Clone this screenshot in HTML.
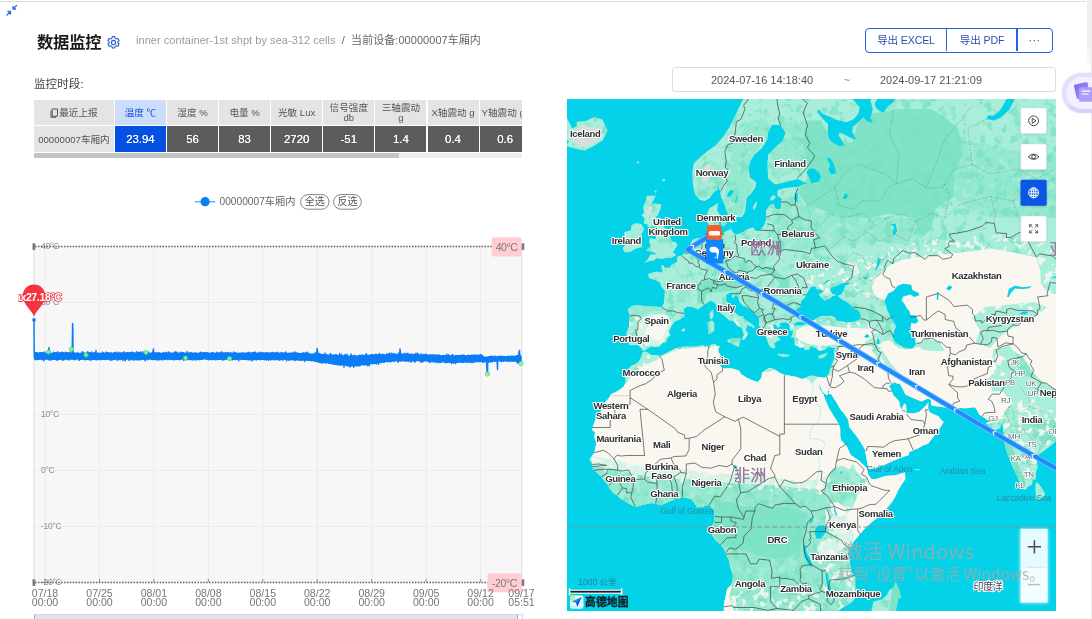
<!DOCTYPE html>
<html lang="zh-CN">
<head>
<meta charset="utf-8">
<title>数据监控</title>
<style>
*{box-sizing:border-box;margin:0;padding:0}
html,body{width:1092px;height:619px;overflow:hidden;background:#fff}
body{position:relative;font-family:"Liberation Sans","Noto Sans CJK SC",sans-serif;color:#333;font-size:11px}
.abs{position:absolute}
svg.abs,#title,#crumb,#period,#btns,#date,#tbl{will-change:transform}
#topline{left:0;top:1px;width:1086px;height:1px;background:#dcdcdc}
#rstrip{left:1086.5px;top:0;width:6px;height:64px;background:linear-gradient(180deg,#f0f0f0 0,#f1f1f1 70%,#fafafa 100%)}
#title{left:36.6px;top:31px;font-size:16.3px;font-weight:bold;color:#1a1a1a;line-height:22px;letter-spacing:-0.2px;white-space:nowrap}
#crumb{left:136px;top:33px;font-size:11px;line-height:15px;color:#9a9a9a;white-space:nowrap;letter-spacing:0.05px}
#crumb b{font-weight:normal;color:#666}
#period{left:34px;top:76.5px;font-size:11.6px;line-height:14px;color:#444;white-space:nowrap}
/* buttons */
#btns{left:865px;top:28px;width:188px;height:25px;border:1.5px solid #1f63e6;border-radius:4px;background:#fff}
#btns span{position:absolute;top:0;height:22px;line-height:22px;text-align:center;color:#2a4fae;font-size:10.6px;letter-spacing:-0.15px;white-space:nowrap}
#btns i{position:absolute;top:0;width:1.5px;height:22px;background:#1f63e6}
/* date */
#date{left:672px;top:67px;width:384px;height:25px;border:1px solid #dcdcdc;border-radius:3px;background:#fff}
#date span{position:absolute;top:0;height:23px;line-height:25px;color:#555;font-size:11px;white-space:nowrap;text-align:center}
/* table */
#tbl{left:34px;top:100px;width:488px;height:58px;overflow:hidden}
#tbl .c{position:absolute;display:flex;align-items:center;justify-content:center;text-align:center;white-space:nowrap;overflow:hidden}
#tbl .h{top:0;height:25px;background:#e4e4e4;color:#555;font-size:9.6px;line-height:10px}
#tbl .d{top:26px;height:26px;background:#5c5c5c;color:#fff;font-size:11.4px;text-shadow:0 0 0.35px #fff}
#tbl .h.sel{background:#ccdcfb;color:#1550d8}
#tbl .d.sel{background:#0450e0}
#tbl .d.first{background:#e4e4e4;color:#555;font-size:9.6px;text-shadow:none}
#sb{left:34px;top:152.5px;width:488px;height:5px;background:#ededed}
#sb i{position:absolute;left:0;top:0;width:365px;height:5px;background:#c4c4c4}
/* float */
#float{left:1062px;top:73px;width:60px;height:39.5px;border-radius:20px;background:#f3f0ff;border:4.5px solid #e4defc;border-bottom-color:#d9d1fa;box-shadow:0 0 2.5px #e4defc,inset 0 0 2px #e9e4fd}
</style>
</head>
<body>
<div id="topline" class="abs"></div>
<div id="rstrip" class="abs"></div>
<div class="abs" style="left:1090.5px;top:0;width:1.5px;height:619px;background:#ededed"></div>
<svg class="abs" style="left:5px;top:3px" width="14" height="14" viewBox="0 0 14 14"><g stroke="#2f6be6" stroke-width="1.3" fill="none" stroke-linecap="round"><path d="M8 6 L11.5 2.5 M8 3.4 V6 H10.6"/><path d="M5.5 8.5 L2 12 M5.5 11.1 V8.5 H2.9"/></g></svg>

<div id="title" class="abs">数据监控</div>
<svg class="abs" style="left:106px;top:35px" width="15" height="15" viewBox="0 0 15 15"><g fill="none" stroke="#2a5fd0" stroke-width="1.1"><circle cx="7.5" cy="7.5" r="2.1"/><path d="M6.3 1.6h2.4l.4 1.6 1.2.7 1.6-.5 1.2 2.1-1.2 1.1v1.4l1.2 1.1-1.2 2.1-1.6-.5-1.2.7-.4 1.6H6.3l-.4-1.6-1.2-.7-1.6.5-1.2-2.1 1.2-1.1V6.6L1.9 5.5l1.2-2.1 1.6.5 1.2-.7z" stroke-linejoin="round"/></g></svg>
<div id="crumb" class="abs">inner container-1st shpt by sea-312 cells&nbsp; <b>/</b>&nbsp; <b>当前设备:00000007车厢内</b></div>

<div id="btns" class="abs">
  <span style="left:0;width:80px">导出 EXCEL</span><i style="left:79.5px"></i>
  <span style="left:81px;width:70px">导出 PDF</span><i style="left:150px"></i>
  <span style="left:151px;width:35px;letter-spacing:0.5px">···</span>
</div>

<div id="period" class="abs">监控时段:</div>
<div id="date" class="abs">
  <span style="left:38px;width:102px">2024-07-16 14:18:40</span>
  <span style="left:168px;width:12px;color:#888">~</span>
  <span style="left:206px;width:104px">2024-09-17 21:21:09</span>
</div>

<div id="tbl" class="abs">
  <div class="c h" style="left:0;width:79.9px"><svg width="9" height="10" viewBox="0 0 9 10" style="margin-right:0"><path d="M2.2 1h5.3v7.2H2.2z M1 2.4v6.9h5" fill="none" stroke="#555" stroke-width="1"/></svg>最近上报</div>
  <div class="c h sel" style="left:80.9px;width:51px">温度 ℃</div>
  <div class="c h" style="left:133.0px;width:51px">湿度 %</div>
  <div class="c h" style="left:185.1px;width:51px">电量 %</div>
  <div class="c h" style="left:237.2px;width:51px">光敏 Lux</div>
  <div class="c h" style="left:289.3px;width:51px;white-space:normal">信号强度<br>db</div>
  <div class="c h" style="left:341.4px;width:51px;white-space:normal">三轴震动<br>g</div>
  <div class="c h" style="left:393.5px;width:51px">X轴震动 g</div>
  <div class="c h" style="left:445.6px;width:51px;justify-content:flex-start;padding-left:2px">Y轴震动 g</div>
  <div class="c d first" style="left:0;width:79.9px">00000007车厢内</div>
  <div class="c d sel" style="left:80.9px;width:51px">23.94</div>
  <div class="c d" style="left:133.0px;width:51px">56</div>
  <div class="c d" style="left:185.1px;width:51px">83</div>
  <div class="c d" style="left:237.2px;width:51px">2720</div>
  <div class="c d" style="left:289.3px;width:51px">-51</div>
  <div class="c d" style="left:341.4px;width:51px">1.4</div>
  <div class="c d" style="left:393.5px;width:51px">0.4</div>
  <div class="c d" style="left:445.6px;width:51px">0.6</div>
</div>
<div id="sb" class="abs"><i></i></div>

<svg class="abs" style="left:0;top:180px" width="560" height="439" viewBox="0 180 560 439" font-family="Liberation Sans, Noto Sans CJK SC, sans-serif">
<line x1="195" y1="201.7" x2="215.3" y2="201.7" stroke="#58a6ff" stroke-width="1.4"/>
<circle cx="205.1" cy="201.7" r="4.6" fill="#0a7cf5"/>
<text x="219.5" y="205.3" font-size="10.2" fill="#666">00000007车厢内</text>
<rect x="300.6" y="194.6" width="28.4" height="14.6" rx="7.3" fill="#fff" stroke="#777" stroke-width="0.9"/>
<text x="314.8" y="205.4" font-size="10" fill="#555" text-anchor="middle">全选</text>
<rect x="333.6" y="194.6" width="27.7" height="14.6" rx="7.3" fill="#fff" stroke="#777" stroke-width="0.9"/>
<text x="347.5" y="205.4" font-size="10" fill="#555" text-anchor="middle">反选</text>
<rect x="34" y="246" width="488" height="336.5" fill="#f7f7f7"/>
<line x1="45.0" y1="246" x2="45.0" y2="582" stroke="#ebebeb" stroke-width="1"/>
<line x1="45.0" y1="579" x2="45.0" y2="582" stroke="#777" stroke-width="0.8"/>
<line x1="99.5" y1="246" x2="99.5" y2="582" stroke="#ebebeb" stroke-width="1"/>
<line x1="99.5" y1="579" x2="99.5" y2="582" stroke="#777" stroke-width="0.8"/>
<line x1="153.9" y1="246" x2="153.9" y2="582" stroke="#ebebeb" stroke-width="1"/>
<line x1="153.9" y1="579" x2="153.9" y2="582" stroke="#777" stroke-width="0.8"/>
<line x1="208.4" y1="246" x2="208.4" y2="582" stroke="#ebebeb" stroke-width="1"/>
<line x1="208.4" y1="579" x2="208.4" y2="582" stroke="#777" stroke-width="0.8"/>
<line x1="262.8" y1="246" x2="262.8" y2="582" stroke="#ebebeb" stroke-width="1"/>
<line x1="262.8" y1="579" x2="262.8" y2="582" stroke="#777" stroke-width="0.8"/>
<line x1="317.2" y1="246" x2="317.2" y2="582" stroke="#ebebeb" stroke-width="1"/>
<line x1="317.2" y1="579" x2="317.2" y2="582" stroke="#777" stroke-width="0.8"/>
<line x1="371.7" y1="246" x2="371.7" y2="582" stroke="#ebebeb" stroke-width="1"/>
<line x1="371.7" y1="579" x2="371.7" y2="582" stroke="#777" stroke-width="0.8"/>
<line x1="426.2" y1="246" x2="426.2" y2="582" stroke="#ebebeb" stroke-width="1"/>
<line x1="426.2" y1="579" x2="426.2" y2="582" stroke="#777" stroke-width="0.8"/>
<line x1="480.6" y1="246" x2="480.6" y2="582" stroke="#ebebeb" stroke-width="1"/>
<line x1="480.6" y1="579" x2="480.6" y2="582" stroke="#777" stroke-width="0.8"/>
<line x1="34" y1="302.5" x2="522" y2="302.5" stroke="#ececec" stroke-width="1"/>
<line x1="34" y1="358.5" x2="522" y2="358.5" stroke="#ececec" stroke-width="1"/>
<line x1="34" y1="414.5" x2="522" y2="414.5" stroke="#ececec" stroke-width="1"/>
<line x1="34" y1="470.5" x2="522" y2="470.5" stroke="#ececec" stroke-width="1"/>
<line x1="34" y1="526.5" x2="522" y2="526.5" stroke="#ececec" stroke-width="1"/>
<line x1="34" y1="246" x2="34" y2="582" stroke="#dcdcdc" stroke-width="1"/>
<line x1="521.8" y1="246" x2="521.8" y2="582" stroke="#dcdcdc" stroke-width="1"/>
<text x="41" y="249.2" font-size="8.5" fill="#8a8a8a" letter-spacing="-0.3">40°C</text>
<text x="41" y="305.2" font-size="8.5" fill="#8a8a8a" letter-spacing="-0.3">30°C</text>
<text x="41" y="417.2" font-size="8.5" fill="#8a8a8a" letter-spacing="-0.3">10°C</text>
<text x="41" y="473.2" font-size="8.5" fill="#8a8a8a" letter-spacing="-0.3">0°C</text>
<text x="41" y="529.2" font-size="8.5" fill="#8a8a8a" letter-spacing="-0.3">-10°C</text>
<text x="41" y="585.2" font-size="8.5" fill="#8a8a8a" letter-spacing="-0.3">-20°C</text>
<line x1="35" y1="246.4" x2="522" y2="246.4" stroke="#5a5a5a" stroke-width="1.5" stroke-dasharray="1.5 1.4"/>
<line x1="35" y1="582.6" x2="522" y2="582.6" stroke="#5a5a5a" stroke-width="1.5" stroke-dasharray="1.5 1.4"/>
<rect x="32.5" y="243.3" width="2.8" height="6.6" fill="#7a7a7a"/><rect x="521.3" y="243.3" width="3" height="6.6" fill="#7a7a7a"/>
<rect x="32.5" y="579.3" width="2.8" height="6.6" fill="#7a7a7a"/><rect x="521.3" y="579.3" width="3" height="6.6" fill="#7a7a7a"/>
<rect x="491.6" y="237.3" width="30" height="19.2" rx="2.5" fill="#ffcdd2"/><text x="506.6" y="250.6" font-size="10.5" fill="#7a7a7a" text-anchor="middle" letter-spacing="-0.4">40°C</text>
<rect x="487.4" y="573.4" width="34.2" height="18.8" rx="2.5" fill="#ffcdd2"/><text x="504.5" y="586.6" font-size="10.5" fill="#7a7a7a" text-anchor="middle" letter-spacing="-0.4">-20°C</text>
<path d="M34.0 320.0 L34.2 354.0 L34.6 358.8 L35.4 352.6 L36.1 359.4 L37.0 354.4 L38.0 357.9 L38.9 354.4 L39.7 359.1 L40.8 354.2 L41.7 359.7 L42.9 352.9 L43.8 360.7 L44.5 352.0 L45.4 358.2 L46.2 353.7 L47.3 358.4 L48.3 352.7 L49.0 347.5 L49.2 359.4 L50.0 354.4 L50.8 359.8 L51.7 353.7 L52.7 359.2 L53.6 352.2 L54.7 358.5 L55.7 353.0 L56.9 360.0 L57.7 351.7 L58.5 359.1 L59.6 354.1 L60.6 357.9 L61.7 352.3 L62.7 360.4 L63.5 352.5 L64.6 359.5 L65.5 352.1 L66.7 359.2 L67.8 354.4 L68.9 359.7 L70.1 352.1 L71.0 359.0 L72.1 354.5 L72.4 338.0 L72.6 323.5 L72.9 331.0 L73.0 358.3 L73.8 354.4 L74.9 358.2 L75.7 353.4 L76.9 358.1 L77.9 352.9 L79.1 360.3 L80.2 353.8 L81.2 358.9 L82.3 351.7 L83.1 358.3 L84.0 353.9 L84.9 359.6 L85.8 354.6 L86.7 358.9 L87.7 351.7 L88.8 359.4 L89.8 352.6 L90.6 360.5 L91.7 352.0 L92.8 359.0 L93.7 354.3 L94.8 358.0 L95.5 354.0 L96.0 350.5 L96.3 358.8 L97.0 354.6 L97.8 358.1 L98.7 354.5 L99.9 359.6 L100.7 353.8 L101.6 358.9 L102.4 352.1 L103.6 359.2 L104.6 354.3 L105.3 358.8 L106.2 352.1 L107.0 357.9 L108.2 353.0 L109.0 359.4 L109.7 353.0 L110.9 360.4 L112.0 353.8 L112.9 358.3 L114.0 353.0 L115.2 358.8 L116.0 352.2 L117.2 360.4 L118.4 352.1 L119.5 358.5 L120.5 353.5 L121.2 357.9 L122.0 353.8 L123.1 360.7 L124.0 351.8 L125.3 360.7 L126.2 353.9 L127.0 358.4 L127.8 352.7 L129.0 360.3 L130.0 352.6 L131.1 358.1 L132.2 351.9 L133.3 360.1 L134.3 354.1 L135.4 358.8 L136.6 351.7 L137.5 359.0 L138.7 352.4 L139.5 358.2 L140.3 351.9 L141.4 358.2 L142.6 351.7 L143.6 358.9 L144.6 354.2 L145.3 360.7 L146.4 353.0 L147.6 359.1 L148.8 352.1 L149.6 358.6 L150.5 353.9 L151.5 358.6 L152.4 354.2 L153.5 349.0 L153.6 358.9 L154.6 352.8 L155.8 359.1 L157.0 353.1 L158.0 359.4 L158.7 353.3 L159.5 357.8 L160.6 354.1 L161.6 360.0 L162.6 353.6 L163.6 359.5 L164.7 354.3 L165.7 358.6 L166.6 352.3 L167.5 359.5 L168.7 351.9 L169.6 359.6 L170.6 353.1 L171.7 359.2 L172.7 353.2 L173.9 359.9 L175.1 351.8 L175.9 359.5 L177.1 352.1 L177.9 358.2 L178.8 354.4 L179.7 358.0 L180.7 352.2 L181.9 358.3 L183.0 352.6 L183.8 360.4 L185.0 353.9 L186.3 359.0 L187.2 351.6 L188.4 358.3 L189.3 353.0 L190.2 358.4 L191.1 352.4 L191.8 359.5 L192.7 354.5 L193.6 359.7 L194.6 354.4 L195.8 360.2 L197.1 354.3 L197.9 357.9 L199.1 353.8 L199.8 359.1 L201.0 352.1 L201.9 358.3 L203.1 352.9 L204.2 358.1 L204.9 352.5 L205.8 358.0 L207.0 352.7 L208.2 358.1 L209.4 354.4 L210.5 359.2 L211.4 352.9 L212.6 358.6 L213.4 353.0 L214.2 358.1 L215.0 354.4 L215.8 358.7 L216.7 352.3 L217.6 359.3 L218.3 353.6 L219.1 358.6 L219.8 352.4 L220.8 358.4 L221.7 351.8 L222.5 360.3 L223.4 353.1 L224.6 359.0 L225.6 352.5 L226.8 358.8 L228.0 352.5 L229.0 359.0 L229.9 354.4 L230.7 358.0 L231.8 353.8 L232.6 358.1 L233.7 352.0 L234.8 358.7 L235.6 353.7 L236.6 358.3 L237.5 353.8 L238.8 360.7 L239.8 353.9 L241.0 358.7 L241.9 354.6 L242.8 359.2 L243.8 354.0 L244.8 357.8 L245.6 354.3 L246.5 357.9 L247.2 353.7 L248.1 359.6 L249.1 352.3 L250.1 360.0 L251.3 353.4 L252.2 360.8 L253.0 352.4 L254.0 357.9 L255.2 351.9 L256.2 360.0 L257.4 354.2 L258.4 359.3 L259.5 352.2 L260.7 359.6 L261.9 352.5 L262.9 358.5 L263.7 354.2 L264.6 358.1 L265.7 352.9 L266.8 359.7 L267.8 353.1 L268.5 360.2 L269.6 353.1 L270.6 359.8 L271.4 352.4 L272.2 358.0 L273.1 352.4 L273.9 360.0 L275.1 353.1 L276.0 359.2 L277.1 352.3 L278.1 359.7 L278.9 354.1 L279.7 360.0 L280.6 352.9 L281.3 358.0 L282.1 352.6 L283.2 359.8 L284.1 353.0 L285.0 359.2 L285.8 351.9 L286.6 360.8 L287.8 354.6 L288.8 360.4 L290.0 353.4 L290.9 358.6 L292.1 354.2 L293.1 358.5 L294.1 352.0 L294.9 360.6 L295.8 352.2 L296.9 358.9 L298.1 353.5 L298.8 358.3 L299.8 353.7 L300.7 358.8 L301.6 354.1 L302.7 358.5 L303.8 352.6 L304.6 361.5 L305.7 352.5 L306.6 359.9 L307.5 352.2 L308.5 360.0 L309.4 354.6 L310.2 359.3 L311.3 354.6 L312.5 359.9 L313.4 354.0 L314.2 360.5 L315.4 352.8 L316.6 361.6 L317.0 348.5 L317.8 352.7 L318.8 362.2 L319.5 353.5 L320.4 362.6 L321.5 355.2 L322.2 363.5 L323.0 354.7 L323.9 361.5 L325.0 353.0 L325.8 363.1 L326.7 354.6 L327.6 361.5 L328.4 356.0 L329.6 363.0 L330.4 353.4 L331.7 363.2 L332.4 356.4 L333.2 363.0 L333.9 356.3 L334.8 364.1 L336.0 354.4 L336.9 363.8 L337.9 356.1 L338.8 362.6 L339.6 353.6 L340.4 364.7 L341.4 354.2 L342.3 363.9 L343.1 356.3 L344.0 367.1 L345.2 354.3 L345.9 363.2 L347.0 354.2 L348.0 365.8 L348.7 356.5 L349.9 367.0 L351.0 353.9 L351.9 363.7 L352.7 356.0 L353.7 367.5 L354.8 355.4 L356.0 365.2 L357.0 358.1 L358.1 364.1 L359.3 355.3 L360.2 363.4 L361.0 355.2 L362.1 363.2 L362.8 355.6 L363.9 364.2 L364.7 355.2 L365.4 363.6 L366.3 353.6 L367.4 365.8 L368.3 356.5 L369.2 365.8 L370.3 356.0 L371.0 363.6 L372.1 355.5 L372.9 363.9 L374.1 356.1 L374.8 362.4 L375.8 354.2 L376.6 363.9 L377.7 354.8 L378.5 364.2 L379.4 353.5 L380.2 361.2 L381.3 355.4 L382.5 361.9 L383.3 355.5 L384.3 362.3 L385.5 355.7 L386.4 360.6 L387.6 355.6 L388.4 359.9 L389.3 353.1 L390.5 362.0 L391.7 353.0 L392.6 360.1 L393.8 353.6 L394.5 361.5 L395.4 354.7 L396.3 359.9 L397.0 355.0 L397.9 362.3 L398.7 352.9 L399.5 360.4 L400.0 349.0 L400.6 353.3 L401.6 359.4 L402.5 354.7 L403.7 359.8 L404.6 353.2 L405.4 360.5 L406.5 353.6 L407.2 359.3 L408.0 353.1 L408.8 361.5 L410.0 354.9 L410.9 362.1 L411.9 355.2 L413.0 360.2 L413.8 356.0 L415.0 362.1 L416.0 353.2 L416.7 360.0 L417.7 353.3 L418.9 360.6 L419.7 354.9 L420.7 362.2 L421.5 353.8 L422.6 362.0 L423.7 354.5 L424.6 360.5 L425.5 354.1 L426.3 360.2 L427.4 355.7 L428.1 359.8 L429.1 355.6 L430.4 362.5 L431.6 355.9 L432.3 360.2 L433.3 354.6 L434.3 360.7 L435.2 355.0 L436.3 362.3 L437.4 354.9 L438.2 362.7 L439.1 355.3 L440.0 362.5 L440.8 356.3 L441.6 360.8 L442.8 355.4 L443.7 361.6 L444.9 355.7 L445.8 362.9 L446.8 354.3 L447.6 361.9 L448.7 354.8 L449.9 360.7 L450.8 357.0 L451.6 363.5 L452.6 354.6 L453.5 363.2 L454.5 356.6 L455.6 363.4 L456.3 355.6 L457.4 361.3 L458.3 356.9 L459.1 361.3 L460.1 355.4 L460.9 360.6 L461.8 355.3 L462.6 361.4 L463.4 354.9 L464.4 360.6 L465.2 356.0 L466.2 362.3 L466.9 356.7 L468.0 361.6 L468.9 356.2 L470.1 361.2 L471.1 355.9 L472.0 362.8 L473.3 355.8 L474.1 362.3 L474.9 356.8 L476.1 361.3 L477.3 355.5 L478.4 361.3 L479.2 356.6 L480.2 361.7 L481.4 356.3 L482.5 362.1 L483.5 357.3 L484.3 361.5 L485.5 357.9 L486.5 362.0 L487.0 371.0 L487.6 373.5 L487.7 357.7 L488.5 362.2 L489.7 357.0 L490.5 362.1 L491.4 356.1 L492.4 361.9 L493.2 356.3 L494.0 361.0 L495.2 356.1 L496.0 360.5 L496.9 356.7 L497.5 369.5 L497.8 360.3 L498.7 356.3 L499.9 360.1 L500.9 356.2 L501.6 361.7 L502.4 356.5 L503.4 361.2 L504.2 356.8 L505.2 360.8 L506.3 356.7 L507.2 359.9 L508.3 356.6 L509.1 361.5 L510.2 356.7 L511.0 360.9 L511.8 357.4 L512.7 360.1 L513.7 356.6 L514.4 361.2 L515.1 356.1 L516.3 361.9 L517.0 355.6 L517.9 363.2 L518.7 354.5 L519.5 350.5 L519.9 362.5 L521.0 363.0 L521.1 356.5" fill="none" stroke="#0a7cf5" stroke-width="1.45" stroke-linejoin="round" stroke-linecap="round"/>
<path d="M34.5 352.4 L35.8 352.0 L37.1 352.1 L38.4 352.8 L39.7 352.1 L41.0 352.0 L42.3 352.1 L43.6 352.4 L44.9 352.7 L46.2 352.4 L47.5 352.9 L48.8 352.7 L50.1 352.2 L51.4 352.7 L52.7 352.8 L54.0 352.3 L55.3 352.0 L56.6 352.3 L57.9 352.8 L59.2 352.3 L60.5 352.1 L61.8 351.9 L63.1 352.5 L64.4 352.4 L65.7 352.1 L67.0 352.1 L68.3 352.2 L69.6 352.3 L70.9 352.6 L72.2 352.9 L73.5 352.3 L74.8 352.4 L76.1 352.8 L77.4 352.2 L78.7 352.9 L80.0 352.8 L81.3 352.7 L82.6 352.3 L83.9 352.3 L85.2 352.8 L86.5 352.6 L87.8 352.8 L89.1 352.0 L90.4 352.5 L91.7 352.9 L93.0 352.3 L94.3 352.2 L95.6 352.0 L96.9 352.6 L98.2 352.8 L99.5 352.5 L100.8 352.8 L102.1 352.9 L103.4 351.9 L104.7 352.7 L106.0 352.4 L107.3 352.1 L108.6 352.6 L109.9 352.8 L111.2 352.1 L112.5 352.9 L113.8 352.1 L115.1 352.1 L116.4 352.7 L117.7 352.7 L119.0 352.6 L120.3 352.2 L121.6 352.2 L122.9 352.3 L124.2 352.1 L125.5 352.6 L126.8 351.9 L128.1 352.0 L129.4 352.6 L130.7 352.1 L132.0 352.1 L133.3 352.0 L134.6 352.6 L135.9 352.3 L137.2 352.2 L138.5 352.4 L139.8 352.2 L141.1 352.5 L142.4 352.3 L143.7 352.7 L145.0 352.8 L146.3 352.7 L147.6 352.8 L148.9 352.5 L150.2 352.9 L151.5 352.2 L152.8 352.2 L154.1 352.8 L155.4 352.5 L156.7 352.1 L158.0 352.8 L159.3 352.0 L160.6 352.8 L161.9 352.8 L163.2 352.0 L164.5 352.3 L165.8 352.3 L167.1 352.8 L168.4 352.1 L169.7 352.6 L171.0 352.9 L172.3 352.6 L173.6 352.5 L174.9 351.9 L176.2 352.0 L177.5 352.9 L178.8 352.5 L180.1 352.5 L181.4 352.4 L182.7 352.0 L184.0 352.1 L185.3 352.9 L186.6 352.1 L187.9 352.9 L189.2 352.4 L190.5 352.7 L191.8 352.5 L193.1 352.6 L194.4 352.6 L195.7 352.2 L197.0 352.8 L198.3 352.8 L199.6 352.2 L200.9 352.3 L202.2 352.5 L203.5 352.0 L204.8 352.0 L206.1 352.7 L207.4 352.0 L208.7 352.5 L210.0 352.7 L211.3 352.4 L212.6 352.1 L213.9 352.5 L215.2 352.7 L216.5 352.2 L217.8 352.7 L219.1 352.1 L220.4 352.8 L221.7 352.0 L223.0 352.7 L224.3 352.2 L225.6 352.7 L226.9 352.6 L228.2 352.4 L229.5 352.6 L230.8 351.9 L232.1 352.8 L233.4 352.8 L234.7 351.9 L236.0 352.2 L237.3 352.7 L238.6 352.8 L239.9 352.5 L241.2 352.5 L242.5 352.2 L243.8 352.3 L245.1 352.7 L246.4 352.5 L247.7 352.0 L249.0 352.3 L250.3 352.5 L251.6 352.2 L252.9 352.1 L254.2 352.0 L255.5 352.2 L256.8 352.6 L258.1 352.8 L259.4 352.1 L260.7 352.3 L262.0 352.5 L263.3 352.3 L264.6 352.2 L265.9 352.7 L267.2 352.1 L268.5 352.4 L269.8 352.8 L271.1 352.7 L272.4 351.9 L273.7 352.8 L275.0 352.3 L276.3 352.4 L277.6 352.1 L278.9 352.5 L280.2 352.7 L281.5 352.5 L282.8 352.8 L284.1 352.5 L285.4 352.6 L286.7 352.9 L288.0 352.5 L289.3 352.7 L290.6 352.8 L291.9 352.1 L293.2 352.9 L294.5 352.8 L295.8 353.1 L297.1 352.4 L298.4 352.8 L299.7 353.1 L301.0 353.0 L302.3 352.6 L303.6 353.0 L304.9 352.9 L306.2 352.7 L307.5 352.7 L308.8 353.2 L310.1 353.2 L311.4 353.7 L312.7 353.5 L314.0 353.5 L315.3 353.4 L316.6 353.3 L317.9 353.1 L319.2 354.0 L320.5 353.3 L321.8 354.1 L323.1 353.7 L324.4 354.4 L325.7 353.9 L327.0 354.5 L328.3 354.4 L329.6 354.4 L330.9 353.9 L332.2 354.7 L333.5 354.3 L334.8 354.4 L336.1 354.3 L337.4 355.0 L338.7 354.8 L340.0 354.9 L341.3 354.9 L342.6 355.3 L343.9 355.1 L345.2 355.2 L346.5 355.2 L347.8 355.2 L349.1 355.7 L350.4 355.3 L351.7 355.1 L353.0 355.4 L354.3 354.8 L355.6 355.1 L356.9 355.7 L358.2 355.0 L359.5 355.3 L360.8 355.0 L362.1 354.6 L363.4 354.7 L364.7 355.0 L366.0 354.9 L367.3 354.6 L368.6 354.9 L369.9 354.6 L371.2 354.1 L372.5 354.0 L373.8 354.2 L375.1 354.2 L376.4 354.0 L377.7 354.2 L379.0 354.2 L380.3 353.8 L381.6 354.3 L382.9 353.4 L384.2 354.2 L385.5 354.2 L386.8 353.3 L388.1 353.5 L389.4 353.3 L390.7 353.5 L392.0 353.4 L393.3 353.4 L394.6 353.5 L395.9 353.4 L397.2 353.9 L398.5 353.3 L399.8 353.5 L401.1 353.3 L402.4 353.6 L403.7 353.8 L405.0 353.8 L406.3 353.5 L407.6 354.1 L408.9 354.2 L410.2 353.4 L411.5 353.3 L412.8 354.3 L414.1 353.7 L415.4 353.4 L416.7 354.0 L418.0 353.8 L419.3 354.3 L420.6 354.5 L421.9 354.4 L423.2 354.5 L424.5 354.5 L425.8 354.0 L427.1 354.0 L428.4 354.8 L429.7 354.2 L431.0 354.2 L432.3 354.4 L433.6 354.6 L434.9 354.9 L436.2 354.5 L437.5 355.2 L438.8 354.5 L440.1 355.0 L441.4 355.2 L442.7 355.0 L444.0 355.1 L445.3 355.1 L446.6 355.4 L447.9 355.2 L449.2 355.0 L450.5 355.3 L451.8 354.7 L453.1 355.1 L454.4 355.6 L455.7 355.0 L457.0 355.3 L458.3 354.7 L459.6 355.0 L460.9 355.2 L462.2 355.2 L463.5 355.0 L464.8 354.7 L466.1 355.5 L467.4 355.0 L468.7 354.6 L470.0 355.3 L471.3 354.5 L472.6 354.7 L473.9 354.3 L475.2 354.4 L476.5 354.7 L477.8 354.4 L479.1 354.7 L480.4 353.9 L481.7 354.2 L483.0 355.6 L484.3 356.8 L485.6 356.2 L486.9 356.8 L488.2 356.1 L489.5 356.2 L490.8 355.9 L492.1 356.3 L493.4 356.5 L494.7 356.5 L496.0 356.3 L497.3 356.2 L498.6 356.4 L499.9 355.6 L501.2 356.4 L502.5 355.7 L503.8 355.9 L505.1 356.0 L506.4 356.4 L507.7 355.6 L509.0 355.9 L510.3 355.7 L511.6 355.5 L512.9 355.6 L514.2 356.2 L515.5 356.2 L516.8 355.3 L518.1 354.8 L519.4 354.9 L520.7 354.5 L520.7 362.1 L519.4 363.0 L518.1 362.9 L516.8 362.1 L515.5 361.2 L514.2 361.1 L512.9 362.0 L511.6 361.8 L510.3 361.5 L509.0 361.3 L507.7 361.6 L506.4 362.1 L505.1 361.1 L503.8 361.5 L502.5 361.3 L501.2 361.8 L499.9 361.5 L498.6 361.2 L497.3 361.7 L496.0 361.8 L494.7 362.0 L493.4 361.5 L492.1 361.9 L490.8 361.9 L489.5 362.3 L488.2 361.7 L486.9 362.3 L485.6 362.0 L484.3 362.4 L483.0 362.9 L481.7 362.1 L480.4 361.7 L479.1 362.3 L477.8 362.4 L476.5 361.8 L475.2 362.6 L473.9 362.6 L472.6 362.1 L471.3 362.8 L470.0 362.8 L468.7 362.9 L467.4 362.6 L466.1 362.4 L464.8 362.4 L463.5 363.1 L462.2 362.9 L460.9 363.1 L459.6 362.6 L458.3 363.1 L457.0 362.9 L455.7 363.1 L454.4 363.3 L453.1 362.6 L451.8 363.1 L450.5 363.1 L449.2 362.7 L447.9 362.9 L446.6 363.0 L445.3 362.8 L444.0 362.7 L442.7 362.1 L441.4 362.9 L440.1 362.7 L438.8 362.0 L437.5 362.5 L436.2 361.8 L434.9 362.7 L433.6 362.6 L432.3 362.3 L431.0 361.6 L429.7 362.4 L428.4 362.2 L427.1 361.6 L425.8 361.6 L424.5 361.3 L423.2 362.1 L421.9 362.2 L420.6 361.8 L419.3 361.1 L418.0 361.3 L416.7 361.2 L415.4 361.5 L414.1 361.9 L412.8 361.4 L411.5 361.4 L410.2 361.5 L408.9 361.1 L407.6 361.5 L406.3 361.9 L405.0 361.4 L403.7 361.4 L402.4 361.2 L401.1 361.8 L399.8 361.4 L398.5 362.0 L397.2 361.1 L395.9 361.2 L394.6 361.7 L393.3 361.5 L392.0 361.9 L390.7 362.1 L389.4 362.1 L388.1 362.4 L386.8 362.3 L385.5 362.1 L384.2 362.3 L382.9 362.7 L381.6 363.0 L380.3 363.2 L379.0 363.2 L377.7 363.1 L376.4 363.8 L375.1 364.2 L373.8 363.7 L372.5 364.0 L371.2 364.1 L369.9 364.6 L368.6 364.7 L367.3 365.2 L366.0 365.1 L364.7 365.7 L363.4 365.6 L362.1 365.2 L360.8 365.8 L359.5 366.4 L358.2 366.5 L356.9 366.3 L355.6 366.4 L354.3 365.9 L353.0 366.3 L351.7 366.7 L350.4 366.4 L349.1 366.6 L347.8 366.6 L346.5 366.1 L345.2 365.7 L343.9 365.5 L342.6 365.4 L341.3 365.4 L340.0 365.8 L338.7 365.5 L337.4 365.2 L336.1 365.2 L334.8 365.0 L333.5 364.7 L332.2 364.6 L330.9 364.3 L329.6 363.5 L328.3 363.9 L327.0 363.1 L325.7 363.0 L324.4 363.5 L323.1 362.3 L321.8 363.0 L320.5 362.7 L319.2 362.6 L317.9 362.4 L316.6 361.8 L315.3 361.9 L314.0 361.6 L312.7 361.2 L311.4 361.6 L310.1 360.9 L308.8 360.9 L307.5 360.8 L306.2 360.8 L304.9 360.5 L303.6 360.6 L302.3 361.0 L301.0 360.8 L299.7 361.1 L298.4 360.6 L297.1 360.6 L295.8 360.7 L294.5 360.1 L293.2 360.6 L291.9 360.3 L290.6 360.5 L289.3 359.9 L288.0 360.3 L286.7 360.0 L285.4 359.9 L284.1 359.6 L282.8 360.5 L281.5 360.3 L280.2 360.2 L278.9 360.5 L277.6 360.0 L276.3 360.2 L275.0 360.2 L273.7 360.1 L272.4 360.0 L271.1 360.3 L269.8 360.1 L268.5 360.5 L267.2 359.9 L265.9 360.2 L264.6 360.4 L263.3 359.9 L262.0 360.0 L260.7 359.8 L259.4 360.2 L258.1 359.9 L256.8 360.1 L255.5 360.0 L254.2 360.2 L252.9 360.2 L251.6 360.4 L250.3 359.7 L249.0 360.3 L247.7 359.9 L246.4 360.3 L245.1 360.1 L243.8 360.0 L242.5 360.0 L241.2 360.3 L239.9 359.5 L238.6 359.7 L237.3 360.1 L236.0 359.9 L234.7 360.3 L233.4 359.9 L232.1 360.5 L230.8 360.2 L229.5 359.7 L228.2 359.7 L226.9 359.8 L225.6 359.7 L224.3 360.4 L223.0 359.8 L221.7 359.7 L220.4 360.0 L219.1 360.1 L217.8 360.0 L216.5 360.3 L215.2 360.4 L213.9 359.8 L212.6 360.2 L211.3 360.3 L210.0 360.0 L208.7 360.4 L207.4 360.0 L206.1 359.8 L204.8 359.5 L203.5 359.6 L202.2 359.9 L200.9 359.9 L199.6 360.3 L198.3 360.3 L197.0 360.1 L195.7 360.0 L194.4 359.7 L193.1 360.5 L191.8 360.3 L190.5 360.0 L189.2 360.3 L187.9 360.0 L186.6 360.5 L185.3 359.7 L184.0 359.7 L182.7 359.6 L181.4 359.7 L180.1 360.2 L178.8 360.3 L177.5 359.9 L176.2 360.1 L174.9 360.0 L173.6 359.8 L172.3 360.2 L171.0 359.8 L169.7 359.9 L168.4 359.7 L167.1 359.6 L165.8 359.8 L164.5 360.3 L163.2 360.3 L161.9 359.5 L160.6 359.7 L159.3 360.5 L158.0 360.4 L156.7 360.4 L155.4 360.3 L154.1 360.1 L152.8 360.2 L151.5 360.1 L150.2 359.6 L148.9 359.7 L147.6 360.4 L146.3 359.5 L145.0 360.4 L143.7 360.1 L142.4 359.8 L141.1 360.2 L139.8 360.4 L138.5 360.4 L137.2 360.5 L135.9 360.2 L134.6 360.4 L133.3 359.8 L132.0 359.8 L130.7 360.5 L129.4 359.7 L128.1 359.5 L126.8 359.7 L125.5 360.2 L124.2 360.0 L122.9 359.9 L121.6 359.8 L120.3 360.4 L119.0 360.3 L117.7 359.6 L116.4 359.6 L115.1 360.0 L113.8 360.0 L112.5 360.4 L111.2 360.2 L109.9 360.4 L108.6 359.8 L107.3 359.7 L106.0 360.2 L104.7 360.1 L103.4 359.7 L102.1 360.1 L100.8 360.3 L99.5 359.7 L98.2 360.0 L96.9 360.4 L95.6 360.2 L94.3 360.0 L93.0 359.9 L91.7 360.2 L90.4 359.8 L89.1 360.3 L87.8 360.2 L86.5 359.7 L85.2 360.4 L83.9 360.0 L82.6 359.7 L81.3 360.1 L80.0 359.9 L78.7 359.9 L77.4 359.5 L76.1 359.7 L74.8 360.4 L73.5 359.9 L72.2 359.7 L70.9 359.5 L69.6 360.2 L68.3 360.5 L67.0 359.8 L65.7 359.6 L64.4 359.7 L63.1 360.3 L61.8 360.1 L60.5 359.8 L59.2 359.9 L57.9 360.5 L56.6 360.4 L55.3 360.1 L54.0 359.9 L52.7 360.0 L51.4 360.3 L50.1 360.4 L48.8 360.4 L47.5 359.7 L46.2 359.8 L44.9 359.8 L43.6 360.4 L42.3 359.7 L41.0 359.8 L39.7 359.7 L38.4 359.9 L37.1 360.4 L35.8 359.7 L34.5 360.5Z" fill="#0a7cf5"/>
<rect x="32.4" y="318.3" width="3.2" height="3.2" fill="#0a7cf5"/>
<circle cx="48.5" cy="352" r="2.1" fill="#9af2a6" stroke="#3ddc5f" stroke-width="0.9" opacity="0.92"/>
<circle cx="71.5" cy="349.2" r="2.1" fill="#9af2a6" stroke="#3ddc5f" stroke-width="0.9" opacity="0.92"/>
<circle cx="86" cy="355" r="2.1" fill="#9af2a6" stroke="#3ddc5f" stroke-width="0.9" opacity="0.92"/>
<circle cx="146" cy="352.5" r="2.1" fill="#9af2a6" stroke="#3ddc5f" stroke-width="0.9" opacity="0.92"/>
<circle cx="185.5" cy="358" r="2.1" fill="#9af2a6" stroke="#3ddc5f" stroke-width="0.9" opacity="0.92"/>
<circle cx="229.5" cy="358.6" r="2.1" fill="#9af2a6" stroke="#3ddc5f" stroke-width="0.9" opacity="0.92"/>
<circle cx="487.5" cy="374" r="2.1" fill="#9af2a6" stroke="#3ddc5f" stroke-width="0.9" opacity="0.92"/>
<circle cx="521" cy="363.5" r="2.1" fill="#9af2a6" stroke="#3ddc5f" stroke-width="0.9" opacity="0.92"/>
<g><path d="M34 316.6 C31.5 309.5 22.7 304.5 22.7 295.8 A11.3 11.3 0 1 1 45.3 295.8 C45.3 304.5 36.5 309.5 34 316.6Z" fill="#f5333f"/>
<clipPath id="pc"><rect x="18" y="280" width="80" height="30"/></clipPath>
<text clip-path="url(#pc)" x="34" y="301" font-size="10.5" font-weight="bold" fill="#fff" stroke="#f5333f" stroke-width="1.7" paint-order="stroke" text-anchor="middle" letter-spacing="-0.35" stroke-linejoin="round">Max27.18°C</text></g>
<text x="45.0" y="597.2" font-size="10.6" fill="#777" text-anchor="middle">07/18</text><text x="45.0" y="606.4" font-size="10.6" fill="#777" text-anchor="middle">00:00</text>
<text x="99.5" y="597.2" font-size="10.6" fill="#777" text-anchor="middle">07/25</text><text x="99.5" y="606.4" font-size="10.6" fill="#777" text-anchor="middle">00:00</text>
<text x="153.9" y="597.2" font-size="10.6" fill="#777" text-anchor="middle">08/01</text><text x="153.9" y="606.4" font-size="10.6" fill="#777" text-anchor="middle">00:00</text>
<text x="208.4" y="597.2" font-size="10.6" fill="#777" text-anchor="middle">08/08</text><text x="208.4" y="606.4" font-size="10.6" fill="#777" text-anchor="middle">00:00</text>
<text x="262.8" y="597.2" font-size="10.6" fill="#777" text-anchor="middle">08/15</text><text x="262.8" y="606.4" font-size="10.6" fill="#777" text-anchor="middle">00:00</text>
<text x="317.2" y="597.2" font-size="10.6" fill="#777" text-anchor="middle">08/22</text><text x="317.2" y="606.4" font-size="10.6" fill="#777" text-anchor="middle">00:00</text>
<text x="371.7" y="597.2" font-size="10.6" fill="#777" text-anchor="middle">08/29</text><text x="371.7" y="606.4" font-size="10.6" fill="#777" text-anchor="middle">00:00</text>
<text x="426.2" y="597.2" font-size="10.6" fill="#777" text-anchor="middle">09/05</text><text x="426.2" y="606.4" font-size="10.6" fill="#777" text-anchor="middle">00:00</text>
<text x="480.6" y="597.2" font-size="10.6" fill="#777" text-anchor="middle">09/12</text><text x="480.6" y="606.4" font-size="10.6" fill="#777" text-anchor="middle">00:00</text>
<text x="521.5" y="597.2" font-size="10.6" fill="#777" text-anchor="middle">09/17</text><text x="521.5" y="606.4" font-size="10.6" fill="#777" text-anchor="middle">05:51</text>
<rect x="34.5" y="614.6" width="483" height="6" fill="#dfe5ef"/><line x1="34.5" y1="614.6" x2="34.5" y2="619" stroke="#8aa5d6" stroke-width="1"/><line x1="517.5" y1="614.6" x2="517.5" y2="619" stroke="#8aa5d6" stroke-width="1"/><line x1="34" y1="614.6" x2="522.5" y2="614.6" stroke="#d0d6e0" stroke-width="1"/><line x1="522.5" y1="614.6" x2="522.5" y2="619" stroke="#cfcfcf" stroke-width="1"/>
</svg>
<svg class="abs" style="left:567px;top:99px" width="489" height="512" viewBox="0 0 489 512" font-family="Liberation Sans, Noto Sans CJK SC, sans-serif">
<rect width="489" height="512" fill="#03d2e9"/>
<defs><clipPath id="lc"><path d="M183.0 -18.4L177.0 -1.9L167.9 17.0L162.4 28.3L156.0 38.0L148.6 46.4L141.3 51.6L133.0 58.6L126.6 64.5L125.3 75.0L125.7 84.3L127.1 91.5L128.5 95.9L133.0 101.1L137.6 102.0L142.2 99.4L146.8 93.3L150.9 90.6L151.4 86.1L153.2 92.4L154.1 98.5L156.9 103.7L159.6 111.3L161.5 117.1L161.9 122.7L164.2 124.0L168.3 122.7L169.7 117.9L175.2 117.9L178.0 112.9L178.9 105.4L179.8 98.5L183.5 95.0L188.0 88.8L189.4 83.4L183.0 78.8L181.6 70.3L183.0 62.5L187.6 55.6L194.5 49.5L200.0 41.2L201.3 32.7L205.0 26.1L213.7 26.1L218.7 33.7L215.5 42.3L208.2 48.5L201.3 55.6L200.4 65.5L200.9 75.0L201.3 79.7L205.9 83.4L208.2 85.6L216.9 83.4L224.2 81.5L231.1 80.1L235.7 82.4L241.2 84.7L235.7 85.6L231.1 87.9L224.2 88.3L216.5 89.2L210.5 91.5L210.5 96.8L214.6 99.4L214.2 107.9L212.8 110.4L208.2 109.6L206.4 104.5L202.3 106.2L199.0 112.1L199.0 121.1L196.8 126.7L194.0 129.9L191.7 131.9L188.0 131.5L186.7 128.3L180.7 129.9L176.1 133.0L169.7 135.4L166.0 133.8L164.2 129.9L160.1 131.5L155.5 134.6L152.8 134.6L152.8 131.5L148.6 130.7L148.6 126.7L146.8 122.7L150.0 118.7L152.8 115.4L150.0 111.3L150.9 106.2L151.4 104.1L148.2 105.8L142.2 109.6L140.4 113.8L139.9 121.9L142.2 126.7L143.6 132.3L142.2 135.4L139.9 137.7L135.8 137.7L134.9 139.2L130.3 139.2L125.7 140.7L124.3 143.0L122.5 149.0L119.3 152.7L117.5 154.5L114.3 156.3L110.1 157.8L110.1 162.8L103.7 166.3L103.3 168.4L97.8 168.8L96.8 166.3L94.1 166.3L95.5 173.6L89.1 172.6L81.3 174.7L81.3 178.1L83.1 179.5L89.1 181.5L92.7 183.5L94.6 188.2L97.8 191.5L97.3 198.0L96.8 204.3L94.6 208.1L86.8 207.5L77.6 206.9L68.4 205.9L65.2 206.9L60.6 210.0L62.5 215.6L62.5 221.7L62.0 227.7L59.7 233.0L59.3 236.5L62.5 238.9L62.0 246.3L66.6 246.3L70.7 245.2L73.5 248.1L75.3 250.9L77.1 252.0L78.5 251.2L82.6 248.1L89.1 248.1L92.7 247.8L95.5 244.1L99.6 242.9L100.5 238.9L103.7 236.2L101.4 232.4L106.0 224.7L108.3 222.3L112.9 220.5L117.5 217.4L117.5 214.3L116.5 210.0L120.7 207.5L124.8 208.1L127.5 209.1L131.2 210.3L134.9 207.5L137.2 205.9L140.8 203.4L143.6 201.8L147.7 204.0L150.0 207.5L150.9 210.9L153.7 214.3L156.9 216.5L159.2 218.6L162.4 221.4L166.0 221.7L168.3 224.1L171.1 227.4L174.3 228.6L176.1 233.0L177.0 236.2L174.5 240.6L176.6 240.9L178.9 238.3L181.4 234.8L178.6 231.0L180.3 226.2L184.8 227.4L187.1 229.8L187.6 227.7L184.8 224.7L180.3 222.0L175.7 219.3L176.8 217.4L172.5 217.1L170.2 215.6L167.0 212.5L165.1 207.5L161.9 204.7L159.2 201.8L159.2 196.0L162.8 193.8L165.8 193.8L164.9 198.0L166.5 199.2L168.3 196.0L171.1 198.0L172.5 203.1L176.1 206.9L178.4 207.5L183.0 210.6L185.8 212.8L189.9 216.2L191.7 218.0L192.2 221.1L191.7 225.9L194.0 229.5L195.4 231.8L197.7 234.8L199.5 238.6L200.4 242.3L202.3 246.9L205.5 249.2L207.8 248.9L208.7 249.5L207.3 244.6L209.1 242.9L211.4 240.9L213.0 242.6L212.8 239.4L209.6 236.5L207.8 234.2L209.6 233.6L206.8 229.5L206.4 225.9L208.0 225.3L210.0 227.4L211.4 229.2L212.8 226.5L214.6 228.0L212.3 224.7L214.6 223.5L217.8 223.2L222.2 224.4L222.9 227.1L222.9 229.2L222.4 231.8L226.1 231.8L225.2 236.5L223.3 238.9L227.0 238.3L227.5 242.3L227.9 246.3L232.0 247.5L231.6 248.6L236.2 248.6L238.5 251.2L242.6 250.3L243.5 247.2L248.5 248.9L251.7 251.5L254.0 251.5L258.6 250.3L261.6 247.5L266.0 248.9L268.7 248.6L266.9 252.0L267.6 256.5L267.1 259.8L265.5 263.7L263.7 268.1L263.0 269.7L262.1 273.7L260.0 277.7L257.2 278.8L250.8 277.7L244.9 276.4L241.7 276.9L239.8 278.3L235.2 280.1L227.9 277.5L218.3 276.1L212.8 274.0L208.7 270.5L202.3 269.1L194.9 273.5L194.0 279.3L190.8 283.1L185.3 281.2L178.9 278.3L173.4 274.5L172.5 271.8L167.9 270.2L163.3 269.1L157.8 269.4L153.7 267.5L152.3 264.8L149.1 263.4L149.1 261.5L152.3 259.3L153.7 256.5L151.4 253.1L151.4 249.8L153.7 246.3L150.0 247.2L148.2 244.6L142.2 246.6L138.5 246.9L134.4 246.6L126.2 247.5L117.0 247.5L108.8 249.2L100.1 253.4L94.1 257.1L89.3 255.9L84.9 256.2L78.5 252.6L75.8 253.1L73.9 258.7L71.4 263.1L68.0 265.3L63.8 267.2L60.4 271.3L57.9 276.7L58.6 282.5L57.0 287.3L51.9 291.2L43.7 295.6L41.4 299.7L36.8 304.3L34.5 311.8L29.9 316.8L27.2 323.8L24.7 330.6L28.1 333.5L27.2 337.9L29.5 344.1L27.2 354.1L22.6 360.3L25.8 365.5L25.8 371.1L29.5 372.9L34.1 378.0L40.0 384.5L42.3 389.1L46.4 394.2L50.6 397.0L53.3 399.2L60.6 403.8L68.4 408.2L75.3 406.1L84.5 404.1L89.5 405.0L93.6 406.3L101.9 402.7L108.3 400.2L113.8 399.0L118.4 398.8L123.4 399.7L127.1 403.4L130.3 408.4L134.9 407.9L140.8 406.1L143.6 407.0L145.4 410.0L147.3 410.7L147.7 414.8L147.7 418.9L146.8 423.4L145.4 426.2L142.7 431.2L145.4 436.7L148.6 441.2L153.7 445.8L156.9 449.7L158.7 454.5L159.4 455.8L161.9 460.9L163.3 468.2L166.0 477.0L164.7 484.9L160.1 490.1L158.5 498.1L156.9 505.6L156.7 521.0L265.5 521.0L270.1 513.8L272.4 510.4L277.9 507.6L282.0 505.2L286.1 501.9L289.3 497.1L288.9 493.4L288.4 487.7L288.4 478.4L288.0 476.1L284.7 473.8L283.8 468.7L282.9 463.6L282.9 459.0L280.6 455.4L282.0 451.3L284.7 446.5L286.6 442.6L290.2 438.5L297.6 429.8L304.5 423.4L310.4 418.7L315.9 414.3L325.1 403.6L328.7 397.0L331.0 391.4L334.7 385.4L338.4 380.1L337.9 373.6L328.3 376.2L318.2 377.1L309.0 380.1L304.5 379.9L301.2 375.7L300.6 374.8L301.2 371.1L298.7 368.3L291.6 361.2L283.6 356.0L279.7 347.0L274.2 341.3L273.3 336.9L273.3 330.1L271.9 325.2L266.0 315.8L262.7 310.3L260.0 304.8L257.7 298.9L256.6 295.6L252.7 289.9L252.0 284.9L252.7 286.2L255.0 291.9L256.8 294.0L259.8 296.3L260.7 295.0L260.9 292.5L263.1 287.0L262.7 288.3L262.3 292.5L261.4 295.0L264.1 295.0L266.4 298.4L269.9 304.0L273.3 310.1L277.2 314.8L281.5 321.3L282.2 327.7L287.3 334.3L291.2 339.3L297.8 349.9L299.6 359.8L301.0 366.9L301.9 369.9L309.0 369.2L315.9 366.4L327.8 361.2L334.2 358.4L342.0 356.0L342.0 353.2L350.7 349.4L356.2 346.5L361.3 344.6L367.2 336.7L368.6 333.0L371.4 331.6L376.9 322.8L375.5 322.3L371.4 317.3L362.9 313.6L361.1 309.6L361.3 303.5L359.2 306.3L356.2 309.1L352.1 313.1L345.7 314.6L339.3 313.8L339.3 310.3L339.1 305.8L337.4 304.5L335.6 307.8L335.6 311.6L332.9 307.3L332.4 303.0L330.3 300.2L326.5 296.6L325.1 293.0L322.8 288.0L321.9 287.8L323.7 285.2L325.5 284.9L327.4 283.1L330.1 284.4L332.6 284.4L335.8 290.1L338.4 295.6L343.9 298.1L354.4 302.5L360.8 299.4L364.0 300.7L364.5 306.3L367.7 307.0L380.5 308.8L388.3 309.6L393.8 309.1L398.9 309.3L407.6 308.3L409.9 311.1L412.2 315.8L415.4 317.3L417.2 318.8L420.4 321.0L425.0 320.5L425.0 322.3L419.9 323.8L419.0 323.8L421.8 327.2L425.2 330.6L428.2 331.6L433.2 329.1L433.7 326.5L435.5 323.8L436.0 329.6L436.4 333.0L436.7 339.8L438.7 349.4L441.0 356.5L442.4 359.8L445.8 368.7L450.0 376.4L452.3 382.4L455.2 389.1L458.2 391.1L461.0 387.8L464.9 385.4L465.8 380.8L468.8 380.8L468.8 373.2L470.8 367.8L469.9 361.2L470.4 356.5L474.7 353.4L480.0 349.6L484.6 346.1L489.1 342.2L496.9 335.5L496.9 -53.0L183.0 -53.0ZM-9.5 29.4L-6.3 22.7L-0.3 18.7L5.2 29.4L9.8 27.2L9.8 22.7L18.9 22.1L27.2 18.2L35.4 20.4L40.5 31.6L35.9 41.2L25.8 47.5L17.1 51.6L9.3 50.0L-1.2 47.0L2.0 42.3L-7.2 35.9L0.6 34.8L-0.3 30.5ZM76.7 163.9L83.6 161.7L86.8 162.1L89.1 159.2L94.1 159.9L99.1 158.9L104.2 158.9L109.2 156.0L107.4 154.1L105.5 153.4L107.4 151.2L110.6 146.0L108.8 143.0L104.6 142.6L103.3 138.4L101.9 134.6L100.5 130.7L96.8 128.3L95.5 121.9L93.2 119.1L88.1 118.7L90.9 116.2L93.2 110.4L94.6 105.4L87.2 104.5L84.0 105.8L88.6 96.8L79.9 96.8L78.5 102.8L76.2 107.9L77.1 113.8L74.4 116.2L77.6 119.5L76.7 124.4L80.3 125.2L80.8 128.3L84.9 128.3L89.1 127.5L86.8 133.0L89.5 136.1L88.6 140.0L82.6 139.6L82.2 143.8L84.0 146.0L81.3 149.4L79.0 151.2L83.6 152.7L88.1 154.1L89.1 155.2L83.6 155.6L81.7 158.5L79.9 161.4ZM75.3 148.2L73.5 148.6L68.4 149.7L63.8 152.7L57.9 153.4L55.6 149.0L58.8 145.3L59.7 142.2L57.0 139.2L57.4 133.0L63.8 131.5L64.8 125.9L69.3 124.0L74.4 125.2L77.1 129.9L74.8 134.6L74.8 140.0L74.4 144.5ZM159.9 241.8L163.8 239.4L173.8 239.2L172.5 244.6L172.0 248.1L168.3 246.6L161.9 243.2ZM140.4 223.5L145.0 221.4L147.3 223.5L147.3 231.8L144.5 233.9L141.3 235.1L141.3 229.5ZM142.2 214.3L145.9 210.6L146.6 216.2L145.0 220.5L143.1 219.3ZM210.5 254.8L216.0 255.1L223.3 255.9L220.6 257.6L216.0 257.9L211.0 256.2ZM250.8 257.3L254.0 255.7L261.1 253.7L258.4 257.6L254.0 259.8L251.3 259.0ZM153.7 121.1L157.8 117.9L160.5 119.5L159.6 124.4L156.9 127.5L154.1 125.2ZM147.7 122.7L151.8 122.3L152.3 125.9L148.6 126.3ZM185.8 107.9L189.0 102.8L190.3 103.7L188.5 108.8L186.2 110.9ZM178.0 116.2L180.7 107.9L178.9 113.8ZM203.2 99.4L205.9 96.3L209.1 97.6L207.3 100.2L203.6 102.0ZM113.8 231.3L117.0 229.2L118.4 230.7L116.5 233.0ZM328.7 483.1L331.9 490.1L334.2 498.5L331.0 500.0L330.1 505.6L329.2 510.4L327.4 518.6L305.8 518.6L304.5 511.4L306.3 502.8L315.0 500.4L319.6 496.2L322.8 490.5L326.5 488.7ZM468.8 383.4L470.8 384.1L474.9 388.9L477.9 394.2L477.2 398.3L472.2 400.8L469.7 399.7L468.8 396.0L468.3 390.5ZM347.1 370.4L352.6 370.1L352.1 371.3L348.0 371.3Z"/></clipPath><filter id="tx1" x="0" y="0" width="100%" height="100%" color-interpolation-filters="sRGB"><feTurbulence type="fractalNoise" baseFrequency="0.11" numOctaves="3" seed="4"/><feColorMatrix type="matrix" values="0 0 0 0 0.47  0 0 0 0 0.88  0 0 0 0 0.76  7 0 0 0 -3.75"/></filter><filter id="tx2" x="0" y="0" width="100%" height="100%" color-interpolation-filters="sRGB"><feTurbulence type="fractalNoise" baseFrequency="0.14" numOctaves="3" seed="11"/><feColorMatrix type="matrix" values="0 0 0 0 0.975  0 0 0 0 0.965  0 0 0 0 0.94  0 9 0 0 -4.9"/></filter><filter id="tx3" x="0" y="0" width="100%" height="100%" color-interpolation-filters="sRGB"><feTurbulence type="fractalNoise" baseFrequency="0.12" numOctaves="3" seed="23"/><feColorMatrix type="matrix" values="0 0 0 0 0.66  0 0 0 0 0.93  0 0 0 0 0.855  0 0 8 0 -4.3"/></filter></defs>
<path d="M183.0 -18.4L177.0 -1.9L167.9 17.0L162.4 28.3L156.0 38.0L148.6 46.4L141.3 51.6L133.0 58.6L126.6 64.5L125.3 75.0L125.7 84.3L127.1 91.5L128.5 95.9L133.0 101.1L137.6 102.0L142.2 99.4L146.8 93.3L150.9 90.6L151.4 86.1L153.2 92.4L154.1 98.5L156.9 103.7L159.6 111.3L161.5 117.1L161.9 122.7L164.2 124.0L168.3 122.7L169.7 117.9L175.2 117.9L178.0 112.9L178.9 105.4L179.8 98.5L183.5 95.0L188.0 88.8L189.4 83.4L183.0 78.8L181.6 70.3L183.0 62.5L187.6 55.6L194.5 49.5L200.0 41.2L201.3 32.7L205.0 26.1L213.7 26.1L218.7 33.7L215.5 42.3L208.2 48.5L201.3 55.6L200.4 65.5L200.9 75.0L201.3 79.7L205.9 83.4L208.2 85.6L216.9 83.4L224.2 81.5L231.1 80.1L235.7 82.4L241.2 84.7L235.7 85.6L231.1 87.9L224.2 88.3L216.5 89.2L210.5 91.5L210.5 96.8L214.6 99.4L214.2 107.9L212.8 110.4L208.2 109.6L206.4 104.5L202.3 106.2L199.0 112.1L199.0 121.1L196.8 126.7L194.0 129.9L191.7 131.9L188.0 131.5L186.7 128.3L180.7 129.9L176.1 133.0L169.7 135.4L166.0 133.8L164.2 129.9L160.1 131.5L155.5 134.6L152.8 134.6L152.8 131.5L148.6 130.7L148.6 126.7L146.8 122.7L150.0 118.7L152.8 115.4L150.0 111.3L150.9 106.2L151.4 104.1L148.2 105.8L142.2 109.6L140.4 113.8L139.9 121.9L142.2 126.7L143.6 132.3L142.2 135.4L139.9 137.7L135.8 137.7L134.9 139.2L130.3 139.2L125.7 140.7L124.3 143.0L122.5 149.0L119.3 152.7L117.5 154.5L114.3 156.3L110.1 157.8L110.1 162.8L103.7 166.3L103.3 168.4L97.8 168.8L96.8 166.3L94.1 166.3L95.5 173.6L89.1 172.6L81.3 174.7L81.3 178.1L83.1 179.5L89.1 181.5L92.7 183.5L94.6 188.2L97.8 191.5L97.3 198.0L96.8 204.3L94.6 208.1L86.8 207.5L77.6 206.9L68.4 205.9L65.2 206.9L60.6 210.0L62.5 215.6L62.5 221.7L62.0 227.7L59.7 233.0L59.3 236.5L62.5 238.9L62.0 246.3L66.6 246.3L70.7 245.2L73.5 248.1L75.3 250.9L77.1 252.0L78.5 251.2L82.6 248.1L89.1 248.1L92.7 247.8L95.5 244.1L99.6 242.9L100.5 238.9L103.7 236.2L101.4 232.4L106.0 224.7L108.3 222.3L112.9 220.5L117.5 217.4L117.5 214.3L116.5 210.0L120.7 207.5L124.8 208.1L127.5 209.1L131.2 210.3L134.9 207.5L137.2 205.9L140.8 203.4L143.6 201.8L147.7 204.0L150.0 207.5L150.9 210.9L153.7 214.3L156.9 216.5L159.2 218.6L162.4 221.4L166.0 221.7L168.3 224.1L171.1 227.4L174.3 228.6L176.1 233.0L177.0 236.2L174.5 240.6L176.6 240.9L178.9 238.3L181.4 234.8L178.6 231.0L180.3 226.2L184.8 227.4L187.1 229.8L187.6 227.7L184.8 224.7L180.3 222.0L175.7 219.3L176.8 217.4L172.5 217.1L170.2 215.6L167.0 212.5L165.1 207.5L161.9 204.7L159.2 201.8L159.2 196.0L162.8 193.8L165.8 193.8L164.9 198.0L166.5 199.2L168.3 196.0L171.1 198.0L172.5 203.1L176.1 206.9L178.4 207.5L183.0 210.6L185.8 212.8L189.9 216.2L191.7 218.0L192.2 221.1L191.7 225.9L194.0 229.5L195.4 231.8L197.7 234.8L199.5 238.6L200.4 242.3L202.3 246.9L205.5 249.2L207.8 248.9L208.7 249.5L207.3 244.6L209.1 242.9L211.4 240.9L213.0 242.6L212.8 239.4L209.6 236.5L207.8 234.2L209.6 233.6L206.8 229.5L206.4 225.9L208.0 225.3L210.0 227.4L211.4 229.2L212.8 226.5L214.6 228.0L212.3 224.7L214.6 223.5L217.8 223.2L222.2 224.4L222.9 227.1L222.9 229.2L222.4 231.8L226.1 231.8L225.2 236.5L223.3 238.9L227.0 238.3L227.5 242.3L227.9 246.3L232.0 247.5L231.6 248.6L236.2 248.6L238.5 251.2L242.6 250.3L243.5 247.2L248.5 248.9L251.7 251.5L254.0 251.5L258.6 250.3L261.6 247.5L266.0 248.9L268.7 248.6L266.9 252.0L267.6 256.5L267.1 259.8L265.5 263.7L263.7 268.1L263.0 269.7L262.1 273.7L260.0 277.7L257.2 278.8L250.8 277.7L244.9 276.4L241.7 276.9L239.8 278.3L235.2 280.1L227.9 277.5L218.3 276.1L212.8 274.0L208.7 270.5L202.3 269.1L194.9 273.5L194.0 279.3L190.8 283.1L185.3 281.2L178.9 278.3L173.4 274.5L172.5 271.8L167.9 270.2L163.3 269.1L157.8 269.4L153.7 267.5L152.3 264.8L149.1 263.4L149.1 261.5L152.3 259.3L153.7 256.5L151.4 253.1L151.4 249.8L153.7 246.3L150.0 247.2L148.2 244.6L142.2 246.6L138.5 246.9L134.4 246.6L126.2 247.5L117.0 247.5L108.8 249.2L100.1 253.4L94.1 257.1L89.3 255.9L84.9 256.2L78.5 252.6L75.8 253.1L73.9 258.7L71.4 263.1L68.0 265.3L63.8 267.2L60.4 271.3L57.9 276.7L58.6 282.5L57.0 287.3L51.9 291.2L43.7 295.6L41.4 299.7L36.8 304.3L34.5 311.8L29.9 316.8L27.2 323.8L24.7 330.6L28.1 333.5L27.2 337.9L29.5 344.1L27.2 354.1L22.6 360.3L25.8 365.5L25.8 371.1L29.5 372.9L34.1 378.0L40.0 384.5L42.3 389.1L46.4 394.2L50.6 397.0L53.3 399.2L60.6 403.8L68.4 408.2L75.3 406.1L84.5 404.1L89.5 405.0L93.6 406.3L101.9 402.7L108.3 400.2L113.8 399.0L118.4 398.8L123.4 399.7L127.1 403.4L130.3 408.4L134.9 407.9L140.8 406.1L143.6 407.0L145.4 410.0L147.3 410.7L147.7 414.8L147.7 418.9L146.8 423.4L145.4 426.2L142.7 431.2L145.4 436.7L148.6 441.2L153.7 445.8L156.9 449.7L158.7 454.5L159.4 455.8L161.9 460.9L163.3 468.2L166.0 477.0L164.7 484.9L160.1 490.1L158.5 498.1L156.9 505.6L156.7 521.0L265.5 521.0L270.1 513.8L272.4 510.4L277.9 507.6L282.0 505.2L286.1 501.9L289.3 497.1L288.9 493.4L288.4 487.7L288.4 478.4L288.0 476.1L284.7 473.8L283.8 468.7L282.9 463.6L282.9 459.0L280.6 455.4L282.0 451.3L284.7 446.5L286.6 442.6L290.2 438.5L297.6 429.8L304.5 423.4L310.4 418.7L315.9 414.3L325.1 403.6L328.7 397.0L331.0 391.4L334.7 385.4L338.4 380.1L337.9 373.6L328.3 376.2L318.2 377.1L309.0 380.1L304.5 379.9L301.2 375.7L300.6 374.8L301.2 371.1L298.7 368.3L291.6 361.2L283.6 356.0L279.7 347.0L274.2 341.3L273.3 336.9L273.3 330.1L271.9 325.2L266.0 315.8L262.7 310.3L260.0 304.8L257.7 298.9L256.6 295.6L252.7 289.9L252.0 284.9L252.7 286.2L255.0 291.9L256.8 294.0L259.8 296.3L260.7 295.0L260.9 292.5L263.1 287.0L262.7 288.3L262.3 292.5L261.4 295.0L264.1 295.0L266.4 298.4L269.9 304.0L273.3 310.1L277.2 314.8L281.5 321.3L282.2 327.7L287.3 334.3L291.2 339.3L297.8 349.9L299.6 359.8L301.0 366.9L301.9 369.9L309.0 369.2L315.9 366.4L327.8 361.2L334.2 358.4L342.0 356.0L342.0 353.2L350.7 349.4L356.2 346.5L361.3 344.6L367.2 336.7L368.6 333.0L371.4 331.6L376.9 322.8L375.5 322.3L371.4 317.3L362.9 313.6L361.1 309.6L361.3 303.5L359.2 306.3L356.2 309.1L352.1 313.1L345.7 314.6L339.3 313.8L339.3 310.3L339.1 305.8L337.4 304.5L335.6 307.8L335.6 311.6L332.9 307.3L332.4 303.0L330.3 300.2L326.5 296.6L325.1 293.0L322.8 288.0L321.9 287.8L323.7 285.2L325.5 284.9L327.4 283.1L330.1 284.4L332.6 284.4L335.8 290.1L338.4 295.6L343.9 298.1L354.4 302.5L360.8 299.4L364.0 300.7L364.5 306.3L367.7 307.0L380.5 308.8L388.3 309.6L393.8 309.1L398.9 309.3L407.6 308.3L409.9 311.1L412.2 315.8L415.4 317.3L417.2 318.8L420.4 321.0L425.0 320.5L425.0 322.3L419.9 323.8L419.0 323.8L421.8 327.2L425.2 330.6L428.2 331.6L433.2 329.1L433.7 326.5L435.5 323.8L436.0 329.6L436.4 333.0L436.7 339.8L438.7 349.4L441.0 356.5L442.4 359.8L445.8 368.7L450.0 376.4L452.3 382.4L455.2 389.1L458.2 391.1L461.0 387.8L464.9 385.4L465.8 380.8L468.8 380.8L468.8 373.2L470.8 367.8L469.9 361.2L470.4 356.5L474.7 353.4L480.0 349.6L484.6 346.1L489.1 342.2L496.9 335.5L496.9 -53.0L183.0 -53.0ZM-9.5 29.4L-6.3 22.7L-0.3 18.7L5.2 29.4L9.8 27.2L9.8 22.7L18.9 22.1L27.2 18.2L35.4 20.4L40.5 31.6L35.9 41.2L25.8 47.5L17.1 51.6L9.3 50.0L-1.2 47.0L2.0 42.3L-7.2 35.9L0.6 34.8L-0.3 30.5ZM76.7 163.9L83.6 161.7L86.8 162.1L89.1 159.2L94.1 159.9L99.1 158.9L104.2 158.9L109.2 156.0L107.4 154.1L105.5 153.4L107.4 151.2L110.6 146.0L108.8 143.0L104.6 142.6L103.3 138.4L101.9 134.6L100.5 130.7L96.8 128.3L95.5 121.9L93.2 119.1L88.1 118.7L90.9 116.2L93.2 110.4L94.6 105.4L87.2 104.5L84.0 105.8L88.6 96.8L79.9 96.8L78.5 102.8L76.2 107.9L77.1 113.8L74.4 116.2L77.6 119.5L76.7 124.4L80.3 125.2L80.8 128.3L84.9 128.3L89.1 127.5L86.8 133.0L89.5 136.1L88.6 140.0L82.6 139.6L82.2 143.8L84.0 146.0L81.3 149.4L79.0 151.2L83.6 152.7L88.1 154.1L89.1 155.2L83.6 155.6L81.7 158.5L79.9 161.4ZM75.3 148.2L73.5 148.6L68.4 149.7L63.8 152.7L57.9 153.4L55.6 149.0L58.8 145.3L59.7 142.2L57.0 139.2L57.4 133.0L63.8 131.5L64.8 125.9L69.3 124.0L74.4 125.2L77.1 129.9L74.8 134.6L74.8 140.0L74.4 144.5ZM159.9 241.8L163.8 239.4L173.8 239.2L172.5 244.6L172.0 248.1L168.3 246.6L161.9 243.2ZM140.4 223.5L145.0 221.4L147.3 223.5L147.3 231.8L144.5 233.9L141.3 235.1L141.3 229.5ZM142.2 214.3L145.9 210.6L146.6 216.2L145.0 220.5L143.1 219.3ZM210.5 254.8L216.0 255.1L223.3 255.9L220.6 257.6L216.0 257.9L211.0 256.2ZM250.8 257.3L254.0 255.7L261.1 253.7L258.4 257.6L254.0 259.8L251.3 259.0ZM153.7 121.1L157.8 117.9L160.5 119.5L159.6 124.4L156.9 127.5L154.1 125.2ZM147.7 122.7L151.8 122.3L152.3 125.9L148.6 126.3ZM185.8 107.9L189.0 102.8L190.3 103.7L188.5 108.8L186.2 110.9ZM178.0 116.2L180.7 107.9L178.9 113.8ZM203.2 99.4L205.9 96.3L209.1 97.6L207.3 100.2L203.6 102.0ZM113.8 231.3L117.0 229.2L118.4 230.7L116.5 233.0ZM328.7 483.1L331.9 490.1L334.2 498.5L331.0 500.0L330.1 505.6L329.2 510.4L327.4 518.6L305.8 518.6L304.5 511.4L306.3 502.8L315.0 500.4L319.6 496.2L322.8 490.5L326.5 488.7ZM468.8 383.4L470.8 384.1L474.9 388.9L477.9 394.2L477.2 398.3L472.2 400.8L469.7 399.7L468.8 396.0L468.3 390.5ZM347.1 370.4L352.6 370.1L352.1 371.3L348.0 371.3Z" fill="#a9eedb"/>
<g clip-path="url(#lc)">
<path d="M212.8 23.8L240.3 21.6L235.7 45.4L240.3 65.5L222.0 75.0L208.2 79.7L201.3 75.0L203.6 55.6L217.4 34.8Z" fill="#93e8d0"/>
<path d="M157.8 102.0L160.1 75.0L167.0 45.4L180.7 23.8L199.0 18.2L203.6 26.1L199.0 40.2L183.0 60.6L180.7 79.7L187.6 86.1L178.4 102.0L176.1 114.6L167.0 117.1L160.1 110.4Z" fill="#93e8d0"/>
<path d="M130.3 97.6L130.3 70.3L144.0 60.6L155.5 70.3L155.5 88.8L144.0 95.9L137.2 100.2Z" fill="#93e8d0"/>
<path d="M212.8 102.0L231.1 93.3L240.3 106.2L267.8 114.6L304.5 118.7L345.7 118.7L354.9 138.4L341.1 146.0L313.6 142.2L286.1 146.0L263.2 149.7L240.3 153.4L222.0 153.4L208.2 146.0L203.6 126.7Z" fill="#93e8d0"/>
<path d="M386.9 40.2L423.6 45.4L460.3 55.6L501.5 55.6L501.5 118.7L469.4 122.7L432.8 118.7L405.3 114.6L386.9 97.6L382.4 75.0Z" fill="#93e8d0"/>
<path d="M34.1 377.6L43.2 375.3L57.0 379.9L66.1 384.5L79.9 389.1L93.6 391.4L107.4 391.4L116.5 389.1L130.3 389.1L144.0 391.4L150.9 402.9L146.3 409.8L121.1 409.8L84.5 407.5L66.1 409.8L43.2 391.4Z" fill="#93e8d0"/>
<path d="M20.3 365.9L47.8 370.1L79.9 377.6L125.7 380.4L171.5 384.5L212.8 386.8L254.0 390.1L263.2 400.6L265.5 414.3L263.2 428.0L267.8 446.2L274.7 464.6L279.2 483.1L277.0 501.9L267.8 521.0L148.6 521.0L139.5 428.0L125.7 414.3L57.0 414.3L20.3 391.4Z" fill="#93e8d0"/>
<path d="M144.0 396.0L167.0 391.4L194.5 391.4L222.0 393.7L244.9 398.3L258.6 405.2L263.2 414.3L260.9 428.0L263.2 441.7L267.8 455.4L267.8 473.8L254.0 483.1L231.1 485.4L212.8 483.1L194.5 478.4L176.1 473.8L164.7 469.2L157.8 450.8L144.0 432.6L141.8 409.8Z" fill="#93e8d0"/>
<path d="M263.2 372.9L274.7 369.2L282.5 373.9L285.2 382.2L290.7 385.4L288.4 393.7L281.5 400.6L274.7 405.2L265.5 402.9L260.9 391.4L260.0 379.9Z" fill="#93e8d0"/>
<path d="M167.0 191.5L176.1 191.5L189.9 201.2L199.0 210.6L208.2 216.8L219.7 213.7L222.0 219.9L203.6 222.9L199.0 228.9L194.5 228.9L192.2 216.8L180.7 207.5L171.5 198.0Z" fill="#93e8d0"/>
<path d="M60.6 210.6L62.5 222.9L70.7 219.9L84.5 211.9L95.9 211.9L94.6 208.1L79.9 206.9L66.1 205.6Z" fill="#93e8d0"/>
<path d="M274.7 199.2L286.1 204.3L299.9 208.8L313.6 215.0L325.1 221.1L327.4 224.1L318.2 224.1L309.0 221.7L302.2 219.9L295.3 219.9L293.0 213.7L286.1 209.4Z" fill="#93e8d0"/>
<path d="M244.9 221.7L258.6 216.8L272.4 221.7L286.1 222.9L297.6 219.9L297.6 224.7L281.5 225.9L263.2 222.9L247.2 224.7Z" fill="#93e8d0"/>
<path d="M325.1 237.7L327.4 244.6L336.5 249.2L350.3 248.6L359.4 243.5L357.2 241.2L349.4 245.8L336.5 245.8L329.7 241.8Z" fill="#93e8d0"/>
<path d="M139.5 178.1L139.5 153.4L157.8 153.4L167.0 158.5L185.3 164.2L185.3 171.2L162.4 174.7Z" fill="#93e8d0"/>
<path d="M109.7 204.3L112.0 188.2L123.4 188.2L123.4 204.3Z" fill="#93e8d0"/>
<path d="M446.5 322.8L464.9 312.8L469.4 325.2L460.3 335.0L448.8 332.6Z" fill="#93e8d0"/>
<path d="M267.8 460.0L281.5 464.6L285.2 476.1L277.0 480.7L267.8 476.1Z" fill="#93e8d0"/>
<rect width="489" height="512" filter="url(#tx3)" opacity="0.8"/>
<path d="M240.3 21.6L254.0 21.6L263.2 43.3L277.0 45.4L286.1 42.3L290.7 23.8L304.5 14.7L331.9 10.1L364.0 10.1L377.8 18.2L391.5 29.4L396.1 55.6L386.9 75.0L386.9 97.6L368.6 110.4L364.0 130.7L354.9 138.4L345.7 118.7L322.8 114.6L304.5 118.7L286.1 118.7L267.8 114.6L254.0 110.4L240.3 106.2L231.1 93.3L240.3 79.7L240.3 65.5L235.7 45.4Z" fill="#7fe3c7"/>
<path d="M146.3 409.8L150.9 402.9L162.4 402.9L176.1 407.5L189.9 407.5L212.8 407.5L231.1 409.8L240.3 416.6L238.0 428.0L235.7 441.7L233.4 450.8L222.0 457.7L208.2 460.0L194.5 457.7L180.7 453.1L167.0 448.5L157.8 448.5L144.0 432.6L146.3 423.4Z" fill="#7fe3c7"/>
<path d="M437.4 335.0L441.9 335.0L448.8 358.9L458.0 382.2L458.0 390.5L453.4 386.8L446.5 372.9L441.9 361.2L438.3 349.4Z" fill="#7fe3c7"/>
<path d="M469.4 325.2L483.2 317.8L501.5 315.3L501.5 337.4L487.8 342.2L478.6 344.6L471.7 339.8Z" fill="#7fe3c7"/>
<path d="M441.9 260.4L451.1 268.6L460.3 279.3L469.4 286.7L487.8 294.0L501.5 298.1L501.5 293.5L487.8 289.9L474.0 283.1L464.9 274.0L455.7 265.9L446.5 257.6Z" fill="#7fe3c7"/>
<path d="M130.3 204.3L130.3 184.8L148.6 179.5L167.0 179.5L176.1 184.8L167.0 191.5L153.2 192.8L139.5 194.7L137.2 204.3Z" fill="#7fe3c7"/>
<path d="M185.3 167.7L203.6 167.7L217.4 178.1L224.2 191.5L219.7 198.0L205.9 196.0L212.8 184.8L203.6 174.7L189.9 171.2Z" fill="#7fe3c7"/>
<path d="M328.7 483.1L334.2 498.5L329.7 506.6L327.4 518.6L320.5 518.6L323.7 501.9L325.1 490.1Z" fill="#7fe3c7"/>
<rect width="489" height="512" filter="url(#tx1)" opacity="0.75"/>
<path d="M20.3 353.2L47.8 356.0L79.9 360.8L102.8 362.2L125.7 363.6L148.6 364.5L171.5 367.3L194.5 372.0L212.8 375.3L231.1 377.6L249.5 377.6L260.9 372.9L263.2 382.2L254.0 390.1L231.1 389.1L212.8 386.8L194.5 385.4L171.5 384.5L148.6 383.1L125.7 380.4L102.8 379.4L79.9 377.6L66.1 374.8L47.8 370.1L20.3 365.9Z" fill="#d6f4e6"/>
<path d="M263.2 418.9L277.0 409.8L290.7 414.3L293.0 434.8L283.8 448.5L274.7 444.0L267.8 432.6L263.2 425.7Z" fill="#d6f4e6"/>
<path d="M254.0 441.7L267.8 439.4L272.4 450.8L267.8 462.3L256.3 460.0L249.5 450.8Z" fill="#d6f4e6"/>
<path d="M70.7 240.6L70.7 219.9L84.5 215.6L98.2 215.0L105.1 222.9L100.5 237.7L91.3 246.3L79.9 246.3Z" fill="#d6f4e6"/>
<path d="M20.3 356.5L47.8 360.8L66.1 365.5L79.9 368.3L102.8 370.1L125.7 371.5L148.6 373.9L171.5 375.7L194.5 377.6L212.8 379.4L231.1 381.3L249.5 381.3L260.9 376.2L265.5 370.1L274.7 366.4L282.9 370.6L286.1 363.6L286.1 356.5L295.3 368.3L302.2 375.3L304.5 358.9L277.0 315.3L265.5 295.0L267.8 249.2L270.1 254.8L269.2 263.1L267.8 268.6L265.5 274.0L263.2 276.7L260.9 276.1L254.0 276.7L249.5 278.3L242.6 282.0L238.0 278.3L217.4 274.0L208.2 271.8L205.9 268.6L196.8 268.6L194.5 279.3L173.8 269.7L155.5 264.2L155.5 254.8L150.5 246.3L144.0 248.1L130.3 248.6L112.0 250.3L93.6 257.6L82.2 261.5L75.3 267.5L66.1 275.1L60.2 283.1L52.4 289.9L43.2 295.6L20.3 330.1Z" fill="#f9f7f0"/>
<path d="M258.6 295.0L264.6 276.7L267.8 268.6L269.6 257.6L270.5 248.6L279.2 246.9L290.7 244.6L302.2 247.5L309.0 257.6L313.6 265.9L320.5 276.7L325.1 282.0L331.9 284.6L364.0 300.2L382.4 320.3L377.8 349.4L341.1 370.6L304.5 373.9L295.3 363.6L277.0 330.1L258.6 300.2Z" fill="#f9f7f0"/>
<path d="M304.5 188.2L309.0 179.5L315.9 173.3L322.8 166.3L336.5 160.6L354.9 157.8L377.8 155.6L400.7 152.7L423.6 149.7L446.5 153.4L469.4 158.5L501.5 160.6L501.5 295.0L487.8 289.9L474.0 282.0L464.9 271.3L455.7 257.6L446.5 252.0L437.4 249.2L430.5 254.8L430.5 263.1L437.4 265.9L441.9 271.3L446.5 279.3L453.4 287.3L451.1 297.6L441.9 307.8L436.4 315.3L430.5 322.3L419.0 325.2L409.9 320.3L386.9 312.8L364.0 310.3L359.4 300.2L341.1 300.2L334.2 287.3L322.8 282.0L318.2 271.3L313.6 263.1L312.7 252.0L315.0 242.9L322.8 241.2L327.4 245.8L331.9 249.2L341.1 250.6L350.3 248.3L354.9 245.2L341.1 240.6L336.5 222.9L331.9 204.3L325.1 194.7L320.5 196.7L318.2 201.2L313.6 201.2L306.7 194.7Z" fill="#f9f7f0"/>
<path d="M299.9 373.9L299.9 381.3L296.7 386.8L290.7 396.0L286.1 407.5L281.5 414.3L272.4 417.5L264.6 414.3L263.2 405.2L270.1 402.9L277.0 407.5L281.5 423.4L286.1 432.6L287.5 440.8L295.3 439.4L341.1 382.2L341.1 368.3L318.2 372.9Z" fill="#f9f7f0"/>
<path d="M277.0 347.0L283.8 358.9L288.4 370.6L295.3 379.9L302.2 377.6L302.2 368.3L286.1 354.1Z" fill="#f9f7f0"/>
<path d="M153.2 487.7L164.7 487.7L162.4 497.1L164.7 506.6L169.3 516.2L153.2 516.2Z" fill="#f9f7f0"/>
<path d="M228.8 231.8L235.7 227.7L249.5 225.9L263.2 227.1L277.0 228.9L290.7 228.9L304.5 230.1L306.7 237.7L295.3 244.6L277.0 246.9L267.8 245.2L258.6 246.9L249.5 246.3L240.3 244.6L233.4 241.8L228.8 237.7Z" fill="#f9f7f0"/>
<path d="M77.6 233.0L84.5 221.1L95.9 219.3L101.4 224.1L97.3 234.8L92.7 242.3L84.5 239.4Z" fill="#f9f7f0"/>
<path d="M423.6 147.5L439.2 140.7L453.4 135.4L459.8 141.5L469.4 159.2L473.1 171.2L474.0 184.8L480.9 194.1L501.5 196.7L501.5 118.7L423.6 118.7Z" fill="#a9eedb"/>
<path d="M405.0 219.0L418.0 208.0L439.0 206.0L467.0 203.0L480.0 208.0L467.0 219.0L449.0 226.0L434.0 237.0L423.0 249.0L408.0 244.0L413.0 231.0Z" fill="#a9eedb"/>
<path d="M426.8 250.0L442.8 247.1L450.0 257.3L445.7 268.9L457.3 277.6L468.9 277.6L489.3 292.2L489.3 320.9L448.6 320.9L445.7 303.8L435.5 292.2L425.3 292.2L421.0 280.5L429.7 268.9L425.3 257.3Z" fill="#a9eedb"/>
<path d="M350.3 246.3L359.4 239.4L373.2 243.5L377.8 252.0L364.0 252.0L354.9 250.3Z" fill="#a9eedb"/>
<path d="M309.0 249.2L315.9 252.0L322.8 263.1L331.9 274.0L341.1 282.0L338.8 285.7L329.7 276.7L320.5 268.6L313.6 257.6Z" fill="#a9eedb"/>
<path d="M241.2 277.7L245.8 276.1L250.4 278.3L245.8 284.6L244.4 284.6Z" fill="#a9eedb"/>
<path d="M264.1 276.7L267.3 268.6L269.2 254.8L270.5 248.6L266.4 248.6L266.0 257.6L264.1 268.6L261.4 276.7Z" fill="#a9eedb"/>
<path d="M195.8 272.9L201.3 268.9L208.2 270.2L203.6 272.4Z" fill="#a9eedb"/>
<path d="M73.9 258.7L75.8 252.9L79.0 252.6L89.1 255.9L93.6 257.1L89.1 261.5L79.9 265.3L72.1 265.9L63.8 271.3L60.2 276.7L57.9 276.7L63.8 267.0L71.4 262.9Z" fill="#a9eedb"/>
<clipPath id="mc"><path d="M432.8 317.8L446.5 305.3L460.3 297.6L478.6 305.3L496.9 315.3L496.9 335.0L478.6 349.4L469.4 363.6L462.6 382.2L455.7 386.8L448.8 368.3L441.9 349.4L437.4 335.0ZM24.9 358.9L79.9 363.6L125.7 365.9L171.5 370.6L217.4 375.3L254.0 377.6L263.2 386.8L254.0 396.0L194.5 391.4L125.7 384.5L79.9 382.2L47.8 375.3L24.9 370.6ZM258.6 405.2L277.0 405.2L295.3 414.3L295.3 441.7L286.1 473.8L288.4 497.1L272.4 511.4L258.6 501.9L254.0 473.8L244.9 460.0L254.0 437.1L258.6 423.4ZM224.2 225.9L249.5 219.9L277.0 222.9L295.3 222.9L313.6 228.9L322.8 240.6L313.6 252.0L295.3 249.2L267.8 252.0L240.3 252.0L226.5 246.3ZM61.6 246.3L61.6 219.9L79.9 213.7L102.8 216.8L107.4 222.9L100.5 240.6L89.1 248.1L75.3 250.3ZM313.6 149.7L377.8 138.4L446.5 134.6L496.9 149.7L496.9 228.9L469.4 228.9L451.1 204.3L414.4 216.8L405.3 240.6L432.8 252.0L451.1 268.6L441.9 284.6L414.4 268.6L386.9 252.0L359.4 237.7L341.1 191.5L313.6 171.2ZM235.7 191.5L235.7 174.7L267.8 164.2L304.5 157.0L322.8 164.2L313.6 191.5L295.3 201.2L277.0 188.2L258.6 198.0ZM57.0 284.6L75.3 257.6L102.8 249.2L148.6 243.5L153.2 263.1L125.7 263.1L93.6 268.6L70.7 282.0ZM157.8 487.7L194.5 487.7L240.3 487.7L258.6 497.1L258.6 521.0L157.8 521.0ZM167.0 219.9L178.4 216.8L189.9 228.9L212.8 222.9L224.2 222.9L222.0 240.6L208.2 252.0L194.5 240.6L185.3 231.8L176.1 243.5L160.1 243.5Z"/></clipPath><g clip-path="url(#mc)"><rect width="489" height="512" filter="url(#tx2)" opacity="0.9"/></g>
<path d="M77.6 113.8L83.6 106.2L86.3 108.8L83.6 114.6L79.9 117.1Z" fill="#d9dfdd"/>
<path d="M134.9 81.5L137.2 67.4L144.0 63.5L143.1 76.9L139.5 84.3Z" fill="#d9dfdd"/>
<path d="M2.0 34.8L15.7 26.1L31.8 29.4L31.8 41.2L18.0 48.5L6.6 43.3Z" fill="#d9dfdd"/>
</g>
<circle cx="71.0" cy="63.4" r="1.1" fill="#a9eedb"/>
<circle cx="96.8" cy="81.3" r="1.2" fill="#a9eedb"/>
<circle cx="88.5" cy="92.6" r="1.1" fill="#a9eedb"/>
<circle cx="470.5" cy="-3.0" r="0" fill="#a9eedb"/>
<path d="M231.1 219.9L231.1 213.1L228.8 213.1L230.7 209.4L233.9 207.5L233.9 202.4L238.5 198.0L238.9 195.4L241.7 191.5L243.7 188.2L247.2 187.5L249.5 188.2L248.5 190.1L254.0 190.8L256.8 192.4L251.7 195.4L255.9 200.5L257.7 201.8L263.7 199.2L265.0 197.3L270.1 196.0L265.5 195.1L263.2 190.8L264.6 188.8L271.5 186.5L275.1 184.2L278.3 183.8L282.9 183.2L282.5 184.8L277.9 186.8L276.5 191.5L274.2 195.4L271.9 196.0L271.0 197.3L274.2 199.9L277.4 201.8L282.0 204.7L284.7 207.5L287.5 210.0L290.7 210.9L293.0 213.7L293.9 217.4L293.0 219.9L288.0 222.6L284.7 222.9L278.8 223.2L272.8 222.0L269.6 221.4L268.2 218.6L264.1 216.5L262.3 217.1L255.4 216.8L250.8 218.3L246.7 221.1L241.7 222.0L236.2 221.4ZM226.5 225.3L230.2 222.9L235.2 222.9L239.8 224.4L235.7 226.2L230.7 226.5L227.9 226.5ZM331.0 186.5L336.3 184.8L344.3 185.7L345.2 191.0L351.4 193.7L352.3 196.3L347.0 198.1L343.4 195.4L336.3 197.6L334.5 201.6L337.2 204.3L339.9 209.6L342.5 212.3L343.4 215.9L348.8 216.8L351.4 222.1L348.8 224.8L344.3 223.9L343.4 229.2L347.9 236.3L348.8 245.2L345.2 249.6L336.3 247.9L328.3 243.4L325.7 238.1L327.4 231.0L329.2 227.4L324.8 219.4L320.3 211.4L317.7 201.6L321.2 194.5L326.5 191.9ZM-567.0 -99.0L-567.0 -99.0L-567.0 -99.0ZM251.3 10.6L256.3 15.3L262.3 17.6L270.1 21.0L279.2 23.3L286.1 20.4L291.6 14.7L292.5 7.7L288.4 2.9L283.8 -1.9L290.7 -18.4L309.0 -18.4L305.4 -5.6L303.5 1.7L305.8 10.1L303.5 19.3L305.8 23.8L301.2 22.7L296.2 18.2L290.7 23.8L286.1 27.2L285.2 32.7L288.9 40.2L285.2 39.6L279.2 36.4L272.4 33.2L271.9 37.0L274.7 41.2L277.4 46.4L272.4 47.0L267.8 44.9L263.2 41.7L261.8 39.1L260.9 34.8L260.9 29.4L260.9 24.9L256.3 20.4L250.4 13.0ZM307.5 5.0L311.0 -1.0L329.0 -1.0L326.5 3.0L321.0 7.0L317.0 13.5L312.5 12.0L309.0 8.5ZM348.0 -11.9L349.4 -6.9L352.6 -3.2L358.5 -6.3L366.3 -8.1L373.2 -11.3L377.8 -18.4L345.7 -18.4ZM441.0 -2.0L449.0 -2.0L442.0 11.0L434.0 18.5L427.0 21.5L420.0 20.0L420.5 16.5L427.0 16.5L432.5 12.0L437.0 5.0ZM403.0 -24.9L405.3 -14.5L409.9 -10.7L415.8 -3.2L419.0 -9.4L415.8 -15.8L410.8 -21.0L409.9 -24.9ZM471.7 -31.7L470.8 -22.3L480.9 -27.6L485.5 -33.1L483.2 -38.6ZM244.4 84.7L247.2 83.4L252.2 82.4L254.0 77.8L252.2 73.6L246.2 69.3L241.2 70.3L239.4 74.1L243.0 79.7ZM264.1 75.5L269.2 74.1L267.8 68.4L266.0 63.5L262.7 58.6L260.0 59.6L263.2 66.4L261.4 70.3ZM159.6 97.6L163.3 98.1L167.0 92.4L164.2 90.6L161.5 93.3ZM167.9 103.7L170.2 96.8L171.1 97.6L168.8 103.7ZM226.5 99.4L229.3 94.1L231.1 94.1L230.2 101.1L231.6 103.7L229.3 102.8ZM275.6 99.4L278.3 94.1L281.1 96.8L278.8 100.2ZM248.5 428.9L251.7 426.6L256.8 426.6L259.5 428.9L258.6 432.6L256.3 437.1L254.0 439.4L249.5 439.8L248.1 434.8ZM237.1 443.5L238.9 448.5L239.4 453.1L243.0 460.0L245.8 467.3L243.0 467.8L238.5 460.0L236.6 453.1L236.6 447.1ZM258.6 471.5L261.4 476.6L261.8 483.1L264.1 490.1L263.2 493.8L260.9 491.5L259.5 483.1L258.6 477.5ZM267.8 407.0L268.7 412.0L270.5 416.6L268.7 416.2L266.9 410.7ZM242.1 423.4L246.7 417.5L245.8 422.1L243.5 423.9ZM379.2 189.5L382.4 186.2L385.6 188.2L381.9 191.8ZM370.0 192.1L371.8 194.7L371.1 201.2L369.8 200.5ZM440.1 198.0L441.9 190.1L447.9 186.8L455.7 188.2L462.6 187.5L465.3 187.2L461.6 189.5L454.8 190.1L447.9 189.5L443.3 194.7L441.9 198.0ZM452.5 214.3L457.1 212.5L461.6 213.1L458.4 215.6L453.9 215.6ZM484.6 178.8L490.1 176.7L487.8 179.5ZM297.1 237.7L300.3 234.8L302.6 237.7L299.4 238.9ZM309.5 244.6L310.0 239.4L312.2 240.6L312.7 245.2ZM309.0 225.3L311.3 227.1L310.0 227.7ZM272.4 374.3L274.7 372.0L275.1 374.3ZM166.0 367.3L168.3 365.9L170.6 368.3L168.3 369.7ZM323.7 125.2L328.7 124.4L330.1 132.3L326.9 136.9L325.5 133.0L327.4 128.3ZM310.9 157.8L313.6 162.8L310.0 169.8L307.7 171.9L310.4 164.2ZM296.2 180.1L300.8 176.1L301.7 174.0L299.4 180.1ZM255.4 185.5L260.0 181.5L263.7 180.8L258.6 184.2ZM250.4 167.7L254.5 169.8L254.0 171.2L250.8 169.1Z" fill="#03d2e9"/>
<path d="M245.8 284.6L245.8 292.5L244.0 297.6L248.1 304.3L252.7 306.8L253.6 314.8L251.7 322.8L246.2 326.2L242.6 335.0L242.6 339.8L249.5 339.8L256.3 342.2L258.2 346.1L251.7 356.0L252.7 365.9L251.7 375.3L247.2 384.5" fill="none" stroke="#03d2e9" stroke-width="0.7" stroke-linejoin="round" opacity="0.32"/>
<path d="M92.7 257.1L95.0 260.4L97.3 271.3L89.1 275.1L85.8 279.9L79.0 284.6L73.0 286.7L63.1 291.4L63.1 298.6M63.1 298.6L80.7 310.3L108.1 329.6L111.0 333.5L117.5 336.0L117.9 339.8L122.3 339.1L129.4 337.6L137.2 331.1L157.8 317.8M63.1 298.6L63.1 305.3L47.8 305.3L47.8 318.1L43.2 320.3L43.2 328.5L24.9 328.5M80.7 310.3L73.0 310.3L77.6 356.5L60.2 356.5L53.8 357.0L50.1 356.0L46.9 359.8L40.9 353.7L36.3 351.3L27.2 353.7M142.2 246.6L140.8 252.0L140.8 257.6L137.2 263.1L138.1 267.5L144.3 273.5L146.6 283.4L148.2 295.0L146.3 303.2L148.6 312.8L157.8 317.8L167.9 322.3L171.5 320.3L176.1 318.1L212.8 337.4L212.8 335.0L217.4 335.0L217.4 276.1M155.7 267.7L155.5 271.8L150.0 275.6L150.0 279.9L146.6 283.4M217.4 325.2L271.9 325.2M122.3 339.1L122.0 350.8L118.8 357.0L107.4 357.5L103.9 358.9L107.4 366.4L112.4 369.7L113.8 373.4L119.3 374.3L119.3 365.0L128.0 364.1L134.9 368.3L144.0 369.2L151.8 366.4L160.1 367.8L165.1 365.0M171.5 320.3L173.8 330.1L173.8 349.9L165.1 361.2L165.1 365.0L167.4 367.8L163.3 382.2L157.8 391.4L153.2 397.9L147.7 397.0L142.2 406.1M212.8 337.4L212.8 355.6L207.8 356.5L205.9 362.6L203.6 369.7L207.8 375.7L207.8 378.0L202.3 379.4L189.9 386.8L180.7 392.8L173.8 393.7L171.5 382.7L167.9 382.2L171.5 377.6L169.7 369.7L167.4 367.8M119.3 374.3L115.6 386.8L115.2 398.8M207.8 378.0L212.8 388.2L217.4 380.8L226.5 384.1L235.7 383.6L240.3 380.8L249.5 372.9L255.0 372.0L254.0 381.3L259.1 384.5L260.0 379.4L263.2 373.9L268.2 369.7L269.6 361.7L272.4 349.4L279.7 344.6M269.6 361.7L276.5 359.3L281.5 360.8L289.8 363.1L297.1 370.6M297.1 370.6L294.4 375.3L299.4 377.6L302.2 384.5L304.5 386.8L318.2 391.4L322.8 391.4L309.0 405.2L302.2 405.7L295.3 408.9L290.7 410.0L285.2 410.2L277.4 411.6L267.8 407.7L258.6 408.9M212.8 388.2L218.7 393.7L228.4 404.7L233.0 408.4L238.0 407.0L244.0 412.0L249.5 411.6L258.6 408.9L260.5 411.1L263.2 419.3L260.9 423.0L258.6 427.1L258.6 432.6L275.1 441.7L275.6 444.0L282.5 449.4M259.1 384.5L258.2 389.6L254.0 391.9L260.9 397.4L264.6 403.4L267.8 407.7M290.7 410.0L290.7 431.6L293.5 435.7M188.0 412.0L188.0 408.4L191.7 404.7L205.5 409.3L207.8 406.1L217.4 404.3L228.4 404.7M244.0 412.0L246.2 418.0L240.3 423.4L238.5 434.4L236.6 439.4L236.6 448.1L238.5 457.7L244.0 465.5M258.6 432.6L242.6 432.6L244.0 438.9L242.1 441.2L244.0 443.0L240.3 447.6L237.5 448.3M244.0 465.5L235.2 466.9L233.0 470.6L233.9 474.7L233.0 482.1L235.7 484.9L239.4 484.0L239.4 489.6L235.7 489.6L227.5 481.2L218.7 479.3L214.6 479.8L212.8 478.0L204.5 479.3L205.0 472.4L202.7 461.3L192.2 460.0L189.9 464.6L183.5 465.0L178.9 454.9L162.4 454.9L159.2 455.4M158.7 454.0L162.4 449.0L168.8 450.3L176.1 444.0L177.0 437.1L183.9 430.3L185.3 418.9L188.0 412.0L178.9 412.0L177.0 418.0L171.5 410.2L169.3 401.1L173.8 393.7M153.7 445.8L157.3 441.7L160.1 438.9L168.8 438.5L169.3 430.7L166.5 428.0L169.3 423.9L163.8 422.1L163.8 418.0M147.7 417.5L154.6 418.0L163.8 418.0L176.6 420.3L177.0 418.0M147.7 423.4L154.6 423.4L154.6 418.0M212.8 478.0L212.8 487.7L203.6 487.7L203.6 502.8L210.0 509.5M156.7 507.8L164.7 506.6L167.0 508.5L187.1 508.5L200.9 511.4L210.0 509.5L218.7 510.4L226.5 511.4L235.2 501.9L242.1 500.0L241.2 497.1L255.0 492.4L252.7 490.5L255.4 484.9L255.0 471.9L253.6 471.0L244.0 465.5M255.0 471.9L258.6 471.5M288.0 476.1L277.0 479.8L262.7 481.2M262.7 481.2L261.4 490.1L266.9 494.8L266.9 501.9L264.1 505.6L260.0 501.9L260.9 494.8L255.0 492.4M242.1 500.0L253.1 505.2L254.0 513.8L252.7 521.0M88.6 404.7L90.4 396.0L90.0 384.5L89.5 377.6L101.9 377.1L104.6 384.5L105.5 394.2L108.3 400.2M110.1 399.7L110.1 386.8L106.9 377.6L113.8 373.4M101.9 377.1L106.9 377.6M68.4 407.9L63.8 398.3L64.8 393.3L66.1 389.1L66.6 381.3L74.4 379.9L77.6 380.4L80.8 383.1L90.0 384.5M77.6 380.4L78.5 373.9L82.6 370.6L86.8 366.9L89.5 363.6L93.6 360.3L103.9 358.9M66.6 381.3L64.8 377.6L61.6 371.1L55.6 372.0L50.6 371.1L50.6 366.4L46.9 359.8M50.6 371.1L40.0 370.1L40.0 374.3L34.1 378.0M40.0 370.1L26.3 371.3M25.8 365.5L31.8 365.0L39.6 366.4L31.8 366.9L25.8 367.8M41.8 386.8L45.5 382.7L51.5 382.2L54.2 386.8L55.6 389.1L50.1 396.5M55.6 389.1L59.7 389.6L59.7 394.2L63.8 393.3M62.5 217.4L65.2 216.2L72.6 217.1L74.4 219.3L71.2 222.9L70.7 230.7L68.4 231.3L70.7 239.4L68.9 245.2M94.6 208.1L100.5 211.9L106.0 211.9L110.6 213.7L117.5 214.3M137.2 205.6L134.9 202.4L134.4 197.3L134.9 192.1L130.8 190.1L130.8 187.5L134.9 181.5L137.6 180.8L137.6 177.4L140.4 171.2L133.5 169.8L132.1 167.7L129.4 167.7L125.3 164.2L122.0 164.2L121.6 162.1L117.5 159.2L114.5 156.3M134.9 192.1L141.3 188.8L144.0 192.8L145.4 188.2L149.1 189.5L150.9 185.5L153.2 186.2L158.3 184.8L159.6 186.8L165.6 188.2L169.7 188.8L174.8 186.8L176.6 185.5L178.4 184.8L178.0 180.1L181.2 180.1L181.6 178.1M137.6 180.8L142.2 179.5L146.8 181.5L146.3 184.2L150.9 185.5M118.4 154.1L122.5 154.1L125.7 153.4L129.4 155.6L128.9 158.5L130.3 158.9L131.7 162.1L130.8 163.5L132.6 165.6L132.1 167.7M130.3 158.9L131.2 154.1L130.3 151.2L134.0 150.5L134.9 148.2L134.9 145.3L135.8 140.7M142.7 127.5L148.2 128.3M167.9 135.4L168.8 140.0L167.4 143.8L169.7 145.3L170.2 152.7L171.5 156.3L170.6 158.0L168.3 157.0L162.4 161.0L158.3 162.1L160.1 164.9L161.0 168.4L166.0 172.8L164.2 174.7L161.5 176.7L162.4 180.1L162.4 181.5L158.7 180.8L153.2 182.2L149.5 182.8L146.8 181.5M166.0 172.8L170.2 174.0L171.5 171.2L180.3 173.3L180.3 175.4L181.6 178.1L189.0 179.5L194.0 176.7L202.3 175.4L204.3 175.4L207.8 178.1M170.6 158.0L172.9 158.5L177.5 159.6L177.0 161.4L179.3 163.5L180.7 161.4L183.9 162.1L185.3 164.2L189.2 167.7L192.2 167.0L194.9 169.8L199.0 168.4L204.5 169.8L207.8 171.2L206.4 167.7L212.8 159.9L211.0 153.4L211.0 145.3L212.3 142.2L210.5 135.4L207.3 131.8L192.6 131.1M189.2 167.7L185.3 171.9L181.6 172.3L180.5 174.0M207.8 171.2L204.3 175.4M210.5 135.4L214.6 135.4L220.1 133.0L221.0 127.5L225.6 124.4L224.7 121.1L216.9 115.4L207.3 115.4L199.3 118.1M200.3 124.8L206.4 126.3L207.3 131.8M214.2 103.1L220.1 102.8L224.2 106.2L228.1 105.8L229.7 107.9L232.0 117.5L224.7 121.1M231.1 89.1L228.4 95.0L228.8 100.2L228.1 105.8M232.0 117.5L237.5 120.7L244.4 121.9L244.0 128.3L248.5 134.6L252.7 138.8L246.7 140.7L248.5 149.0L244.6 149.2L243.0 154.9L236.6 152.7L227.5 151.6L217.4 150.5L211.0 153.4M248.5 149.0L257.7 146.8L265.0 157.0L270.1 162.1L277.0 164.9L286.6 167.0L284.7 178.8L278.3 183.5M207.8 178.1L216.9 180.1L224.7 176.4L230.2 175.0L236.6 178.8L240.3 188.8L235.5 188.5L232.0 195.1L238.7 196.0M224.7 176.4L228.8 181.5L231.6 188.2L232.0 195.1M207.8 178.1L200.0 188.8L195.8 190.5L189.4 192.1L183.9 191.8L178.9 188.2L176.6 185.5M195.8 190.5L200.9 196.7L201.3 199.2L205.9 199.9L206.8 203.1L208.2 205.6L219.2 206.6L226.5 203.4L233.9 205.9M206.8 203.1L205.5 209.4L208.2 209.4L205.5 215.0L207.8 220.8L215.1 219.6L222.4 220.8L223.6 218.6L228.8 216.2L231.1 216.9M223.6 218.6L224.7 221.1L222.2 224.4M194.5 230.7L197.7 227.1L199.0 223.8L207.8 220.8M191.7 217.7L196.8 215.6L197.2 217.4L196.8 221.1L199.0 223.8M196.8 215.6L194.9 212.5L196.3 210.6L192.6 209.4M199.0 223.8L197.2 217.4L201.3 215.0L205.5 215.0M175.0 196.7L180.3 196.7L189.9 198.6L191.7 198.6L190.3 202.4L192.6 209.4L187.6 213.7M175.0 196.7L177.0 203.1L183.5 210.6L187.6 213.7M165.1 194.7L172.9 194.7L174.8 190.1L178.9 188.2M191.7 198.6L189.9 194.7L189.4 192.1M153.7 92.4L156.9 86.1L160.1 82.4L158.7 75.0L161.9 71.2L158.3 68.4L159.2 62.5L157.8 52.6L161.0 45.4L165.6 44.4L168.3 33.7L169.3 22.7L173.8 20.4L178.0 10.1L176.6 6.5L182.1 -0.7L185.8 -5.6M213.5 26.1L211.2 19.3L212.8 14.7L211.0 7.7L210.0 0.5L197.2 -12.7M230.2 79.2L237.1 72.2L245.8 60.6L247.6 56.6L240.3 48.5L242.8 44.4L238.5 35.9L239.4 29.4L240.7 27.2L236.2 13.6L240.3 4.1L233.4 -1.9L234.8 -11.9M268.5 252.9L270.8 250.6L271.0 247.5L277.0 247.5L281.5 248.1L289.3 245.8L296.9 245.8L304.0 244.6L308.1 245.5L306.7 238.9L304.7 232.4L308.1 230.7L303.1 228.3L302.2 222.3L297.6 220.2L293.2 219.9M286.1 208.1L297.6 209.4L306.7 212.5L315.5 217.4L319.6 221.1L325.5 217.7M315.5 217.4L315.9 222.3L309.0 221.1L302.2 222.3M309.0 221.1L311.8 224.1L313.6 227.7L315.9 231.8L315.9 235.4M308.1 230.7L315.9 235.4L322.8 231.3L326.9 238.0M296.9 245.8L292.1 249.8L291.6 258.7L280.6 266.4L271.5 272.4L266.9 270.2M280.6 266.4L282.5 273.2L272.4 276.7L277.0 282.0L274.7 284.6L268.2 288.8L263.0 288.0M282.5 273.2L288.0 274.3L295.7 278.8L307.7 288.8L315.9 289.3L320.3 289.9L321.4 292.2L324.6 292.2M315.9 289.3L316.1 286.7L319.6 284.1L322.6 284.6M308.1 245.5L310.9 252.0L314.1 253.7L310.9 260.4L312.7 263.1L314.1 268.1L321.0 272.4L321.4 278.8L322.8 282.0L325.3 284.9M259.8 277.7L262.7 287.3M263.7 268.1L266.9 267.0L265.7 271.8L265.5 276.7L263.2 287.0M267.6 259.6L269.6 260.4L270.5 262.0L267.3 267.0M299.0 352.3L300.8 347.5L305.4 347.5L316.8 348.2L322.8 343.7L327.8 341.7L341.1 339.8L354.9 335.0L357.8 325.2L355.8 321.8L343.9 320.5L339.3 314.8M357.8 325.2L359.4 315.3L358.5 310.8L361.3 310.8M341.1 339.8L346.2 351.1M335.6 311.6L338.4 312.3M349.8 244.3L353.9 243.8L356.7 240.0L364.9 239.2L370.4 242.6L374.6 243.5L379.6 248.3L383.1 248.3L383.3 254.3L380.1 262.6L381.9 265.6L380.5 268.1L381.7 276.7L386.0 277.2L386.0 280.1L381.8 285.4L385.6 289.3L390.6 293.5L390.6 299.2L392.9 302.0L386.5 304.3L385.1 309.3M381.8 285.4L389.2 287.8L396.6 287.8L406.7 285.2L407.1 279.9L413.5 277.2L420.4 274.5L421.3 268.1L425.0 267.0L423.6 263.1L428.7 262.0L430.9 256.5L429.1 251.5L435.1 247.5L446.1 244.9M383.3 254.3L388.3 255.9L392.0 252.9L398.4 250.3L399.8 245.8L407.6 244.3L413.5 245.2L420.4 245.8L424.5 242.9L425.0 238.3L430.0 239.4L430.9 248.1L438.7 243.8L446.1 244.9M407.6 244.3L403.4 238.9L397.0 235.1L388.8 228.9L386.5 222.3L378.2 220.5L378.2 215.6L371.4 211.9L365.9 215.6L363.8 217.7L359.4 221.0L356.7 221.1L353.7 216.5L343.2 218.3M359.4 221.0L359.4 198.0L371.4 194.4L382.6 201.8L386.9 207.5L400.2 206.2L405.7 210.6L405.3 214.3L407.6 216.8L408.5 222.0L414.4 221.7L414.9 224.1L419.0 220.5L424.5 215.6L428.2 215.3M428.2 215.3L429.1 211.9L439.7 214.3L439.7 210.6L443.3 209.4L450.2 211.3L465.8 211.9L470.4 215.6L462.1 220.5L455.2 222.9L451.1 226.5L445.6 225.9L441.0 230.1L440.3 232.1L431.9 233.0L426.4 231.3L420.4 231.8L421.3 228.3L426.4 227.7L428.2 227.4L434.2 226.5L437.4 224.1L431.4 220.2L424.5 219.9L428.2 215.3M440.3 232.1L441.0 237.1L446.1 238.0L446.1 244.9L450.2 248.1L454.8 254.0L459.4 254.8M413.5 245.2L416.3 239.4L413.5 233.6L417.2 231.3L420.4 231.8M328.3 188.8L325.1 187.2L322.8 179.8L318.4 178.1L315.9 175.4L318.4 169.8L317.3 168.8L320.5 161.0L326.0 164.9L326.5 159.9L335.6 151.6L342.5 154.1L347.5 153.4L353.0 157.0L358.1 160.3L361.7 156.7L371.4 156.7L375.9 160.3L384.2 158.5L385.6 155.2L377.8 149.7L382.4 147.1L381.0 144.9L382.8 142.2L387.4 142.2L383.3 138.1L382.4 135.0L389.7 134.2L401.6 131.9L415.4 127.1L419.0 123.6L427.3 124.4L429.1 133.8L439.7 134.6L439.2 138.8L443.8 138.4L453.4 133.0L459.8 140.0L469.4 158.1L472.6 154.9L485.5 157.0L492.4 163.5L502.9 169.8M470.4 215.6L470.8 210.6L473.1 209.4L471.3 200.5L470.4 198.0L480.9 196.7L480.0 194.7L483.2 183.5L494.6 184.5L495.6 175.4L502.9 169.8M415.4 316.8L417.9 313.8L428.2 313.3L426.8 306.8L424.5 302.2L421.3 300.2L425.4 295.0L432.3 295.3L439.2 285.2L444.2 278.8L444.7 274.0L448.4 272.4L443.8 269.7L441.9 267.5L440.8 261.5L446.1 259.8L455.7 257.6L459.4 254.8L462.1 259.8L464.9 261.5L463.5 265.3L466.7 271.3L463.9 277.7L474.5 283.6L469.9 290.9L474.9 293.0L484.6 298.1L490.5 298.6L496.0 302.2M474.5 283.6L479.1 284.1L485.5 288.8L492.8 293.5L496.9 295.6" fill="none" stroke="#39403f" stroke-width="0.8" stroke-linejoin="round" opacity="0.85"/>
<path d="M63.1 296.7L42.3 296.7M240.3 106.2L254.0 97.6L267.8 88.8L277.0 75.0L290.7 65.5L304.5 70.3L318.2 75.0L329.7 84.3M267.8 88.8L272.4 106.2L286.1 110.4L295.3 102.0L313.6 102.0L320.5 88.8L329.7 84.3L345.7 79.7L359.4 88.8L375.5 88.8L386.9 70.3L405.3 65.5M254.0 126.7L263.2 114.6L277.0 118.7L295.3 114.6L309.0 126.7L320.5 118.7L336.5 114.6L348.0 122.7L364.0 114.6L377.8 118.7L391.5 106.2L405.3 102.0L423.6 97.6L446.5 102.0L460.3 88.8L487.8 79.7M263.2 149.7L277.0 138.4L286.1 142.2L299.9 133.0L313.6 142.2L327.4 134.6L341.1 142.2L348.0 122.7M277.0 164.2L286.1 153.4L295.3 157.0L299.9 167.7L311.3 160.6L318.2 160.6M286.1 184.8L295.3 178.1L304.5 181.5L313.6 174.7M286.1 198.0L295.3 191.5L304.5 198.0L318.2 201.2M329.7 84.3L331.9 55.6L322.8 34.8L327.4 6.5M359.4 88.8L368.6 65.5L377.8 40.2L391.5 23.8L405.3 6.5M405.3 65.5L423.6 75.0L451.1 70.3L469.4 79.7L487.8 70.3M405.3 65.5L400.7 29.4L423.6 18.2M377.8 118.7L382.4 97.6L377.8 84.3L375.5 88.8M423.6 97.6L428.2 114.6L427.3 124.4M446.5 102.0L451.1 118.7L460.3 130.7M441.9 307.8L451.1 315.3L462.6 307.8L471.7 311.3L480.9 315.3L487.8 322.8L485.5 335.0L476.3 344.6L471.7 337.4L460.3 335.0M436.4 334.0L444.2 326.2L453.4 327.7L460.3 335.0L467.1 342.2L458.0 347.0L455.7 356.5L442.4 359.8M455.7 356.5L462.6 365.9L457.1 373.9L452.0 373.9L446.5 371.5M457.1 373.9L457.1 390.1M462.6 365.9L470.8 365.9M467.1 342.2L474.0 347.0L470.8 355.1M441.9 307.8L437.4 312.8L444.2 326.2M453.4 287.3L458.0 295.0L462.6 300.2L462.6 307.8M458.0 282.0L469.4 289.9L487.8 300.2" fill="none" stroke="#5f7a76" stroke-width="0.6" stroke-dasharray="1.4 1.4" opacity="0.8"/>
<line x1="0" y1="428.0" x2="489" y2="428.0" stroke="#7a969d" stroke-width="1.2" stroke-dasharray="5 2.6"/>
<g>
<text x="18.2" y="38.0" font-size="9.5" font-weight="bold" fill="#2e2e2e" stroke="#fff" stroke-width="2.2" paint-order="stroke" stroke-linejoin="round" text-anchor="middle" letter-spacing="-0.3" >Iceland</text>
<text x="179.0" y="43.4" font-size="9.5" font-weight="bold" fill="#2e2e2e" stroke="#fff" stroke-width="2.2" paint-order="stroke" stroke-linejoin="round" text-anchor="middle" letter-spacing="-0.3" >Sweden</text>
<text x="223.0" y="67.9" font-size="9.5" font-weight="bold" fill="#2e2e2e" stroke="#fff" stroke-width="2.2" paint-order="stroke" stroke-linejoin="round" text-anchor="middle" letter-spacing="-0.3" >Finland</text>
<text x="145.0" y="77.4" font-size="9.5" font-weight="bold" fill="#2e2e2e" stroke="#fff" stroke-width="2.2" paint-order="stroke" stroke-linejoin="round" text-anchor="middle" letter-spacing="-0.3" >Norway</text>
<text x="149.0" y="122.4" font-size="9.5" font-weight="bold" fill="#2e2e2e" stroke="#fff" stroke-width="2.2" paint-order="stroke" stroke-linejoin="round" text-anchor="middle" letter-spacing="-0.3" >Denmark</text>
<text x="100.0" y="125.8" font-size="9.5" font-weight="bold" fill="#2e2e2e" stroke="#fff" stroke-width="2.2" paint-order="stroke" stroke-linejoin="round" text-anchor="middle" letter-spacing="-0.3" >United</text>
<text x="101.0" y="136.4" font-size="9.5" font-weight="bold" fill="#2e2e2e" stroke="#fff" stroke-width="2.2" paint-order="stroke" stroke-linejoin="round" text-anchor="middle" letter-spacing="-0.3" >Kingdom</text>
<text x="59.4" y="144.7" font-size="9.5" font-weight="bold" fill="#2e2e2e" stroke="#fff" stroke-width="2.2" paint-order="stroke" stroke-linejoin="round" text-anchor="middle" letter-spacing="-0.3" >Ireland</text>
<text x="231.0" y="138.0" font-size="9.5" font-weight="bold" fill="#2e2e2e" stroke="#fff" stroke-width="2.2" paint-order="stroke" stroke-linejoin="round" text-anchor="middle" letter-spacing="-0.3" >Belarus</text>
<text x="189.0" y="147.4" font-size="9.5" font-weight="bold" fill="#2e2e2e" stroke="#fff" stroke-width="2.2" paint-order="stroke" stroke-linejoin="round" text-anchor="middle" letter-spacing="-0.3" >Poland</text>
<text x="147.0" y="157.0" font-size="9.5" font-weight="bold" fill="#2e2e2e" stroke="#fff" stroke-width="2.2" paint-order="stroke" stroke-linejoin="round" text-anchor="middle" letter-spacing="-0.3" >Germany</text>
<text x="245.5" y="169.4" font-size="9.5" font-weight="bold" fill="#2e2e2e" stroke="#fff" stroke-width="2.2" paint-order="stroke" stroke-linejoin="round" text-anchor="middle" letter-spacing="-0.3" >Ukraine</text>
<text x="167.0" y="180.8" font-size="9.5" font-weight="bold" fill="#2e2e2e" stroke="#fff" stroke-width="2.2" paint-order="stroke" stroke-linejoin="round" text-anchor="middle" letter-spacing="-0.3" >Austria</text>
<text x="114.0" y="190.4" font-size="9.5" font-weight="bold" fill="#2e2e2e" stroke="#fff" stroke-width="2.2" paint-order="stroke" stroke-linejoin="round" text-anchor="middle" letter-spacing="-0.3" >France</text>
<text x="215.6" y="195.4" font-size="9.5" font-weight="bold" fill="#2e2e2e" stroke="#fff" stroke-width="2.2" paint-order="stroke" stroke-linejoin="round" text-anchor="middle" letter-spacing="-0.3" >Romania</text>
<text x="159.0" y="212.4" font-size="9.5" font-weight="bold" fill="#2e2e2e" stroke="#fff" stroke-width="2.2" paint-order="stroke" stroke-linejoin="round" text-anchor="middle" letter-spacing="-0.3" >Italy</text>
<text x="89.6" y="224.9" font-size="9.5" font-weight="bold" fill="#2e2e2e" stroke="#fff" stroke-width="2.2" paint-order="stroke" stroke-linejoin="round" text-anchor="middle" letter-spacing="-0.3" >Spain</text>
<text x="205.0" y="235.9" font-size="9.5" font-weight="bold" fill="#2e2e2e" stroke="#fff" stroke-width="2.2" paint-order="stroke" stroke-linejoin="round" text-anchor="middle" letter-spacing="-0.3" >Greece</text>
<text x="64.4" y="243.0" font-size="9.5" font-weight="bold" fill="#2e2e2e" stroke="#fff" stroke-width="2.2" paint-order="stroke" stroke-linejoin="round" text-anchor="middle" letter-spacing="-0.3" >Portugal</text>
<text x="264.5" y="238.4" font-size="9.5" font-weight="bold" fill="#2e2e2e" stroke="#fff" stroke-width="2.2" paint-order="stroke" stroke-linejoin="round" text-anchor="middle" letter-spacing="-0.3" >Türkiye</text>
<text x="409.6" y="179.9" font-size="9.5" font-weight="bold" fill="#2e2e2e" stroke="#fff" stroke-width="2.2" paint-order="stroke" stroke-linejoin="round" text-anchor="middle" letter-spacing="-0.3" >Kazakhstan</text>
<text x="442.8" y="223.2" font-size="9.5" font-weight="bold" fill="#2e2e2e" stroke="#fff" stroke-width="2.2" paint-order="stroke" stroke-linejoin="round" text-anchor="middle" letter-spacing="-0.3" >Kyrgyzstan</text>
<text x="372.2" y="238.3" font-size="9.5" font-weight="bold" fill="#2e2e2e" stroke="#fff" stroke-width="2.2" paint-order="stroke" stroke-linejoin="round" text-anchor="middle" letter-spacing="-0.3" >Turkmenistan</text>
<text x="279.5" y="258.9" font-size="9.5" font-weight="bold" fill="#2e2e2e" stroke="#fff" stroke-width="2.2" paint-order="stroke" stroke-linejoin="round" text-anchor="middle" letter-spacing="-0.3" >Syria</text>
<text x="298.6" y="272.4" font-size="9.5" font-weight="bold" fill="#2e2e2e" stroke="#fff" stroke-width="2.2" paint-order="stroke" stroke-linejoin="round" text-anchor="middle" letter-spacing="-0.3" >Iraq</text>
<text x="350.0" y="276.1" font-size="9.5" font-weight="bold" fill="#2e2e2e" stroke="#fff" stroke-width="2.2" paint-order="stroke" stroke-linejoin="round" text-anchor="middle" letter-spacing="-0.3" >Iran</text>
<text x="399.5" y="266.4" font-size="9.5" font-weight="bold" fill="#2e2e2e" stroke="#fff" stroke-width="2.2" paint-order="stroke" stroke-linejoin="round" text-anchor="middle" letter-spacing="-0.3" >Afghanistan</text>
<text x="419.5" y="287.4" font-size="9.5" font-weight="bold" fill="#2e2e2e" stroke="#fff" stroke-width="2.2" paint-order="stroke" stroke-linejoin="round" text-anchor="middle" letter-spacing="-0.3" >Pakistan</text>
<text x="485.0" y="297.0" font-size="9.5" font-weight="bold" fill="#2e2e2e" stroke="#fff" stroke-width="2.2" paint-order="stroke" stroke-linejoin="round" text-anchor="middle" letter-spacing="-0.3" >Nepal</text>
<text x="309.5" y="320.9" font-size="9.5" font-weight="bold" fill="#2e2e2e" stroke="#fff" stroke-width="2.2" paint-order="stroke" stroke-linejoin="round" text-anchor="middle" letter-spacing="-0.3" >Saudi Arabia</text>
<text x="465.0" y="324.0" font-size="9.5" font-weight="bold" fill="#2e2e2e" stroke="#fff" stroke-width="2.2" paint-order="stroke" stroke-linejoin="round" text-anchor="middle" letter-spacing="-0.3" >India</text>
<text x="358.6" y="335.4" font-size="9.5" font-weight="bold" fill="#2e2e2e" stroke="#fff" stroke-width="2.2" paint-order="stroke" stroke-linejoin="round" text-anchor="middle" letter-spacing="-0.3" >Oman</text>
<text x="319.5" y="358.4" font-size="9.5" font-weight="bold" fill="#2e2e2e" stroke="#fff" stroke-width="2.2" paint-order="stroke" stroke-linejoin="round" text-anchor="middle" letter-spacing="-0.3" >Yemen</text>
<text x="282.6" y="392.2" font-size="9.5" font-weight="bold" fill="#2e2e2e" stroke="#fff" stroke-width="2.2" paint-order="stroke" stroke-linejoin="round" text-anchor="middle" letter-spacing="-0.3" >Ethiopia</text>
<text x="308.6" y="418.4" font-size="9.5" font-weight="bold" fill="#2e2e2e" stroke="#fff" stroke-width="2.2" paint-order="stroke" stroke-linejoin="round" text-anchor="middle" letter-spacing="-0.3" >Somalia</text>
<text x="275.6" y="429.2" font-size="9.5" font-weight="bold" fill="#2e2e2e" stroke="#fff" stroke-width="2.2" paint-order="stroke" stroke-linejoin="round" text-anchor="middle" letter-spacing="-0.3" >Kenya</text>
<text x="262.0" y="460.9" font-size="9.5" font-weight="bold" fill="#2e2e2e" stroke="#fff" stroke-width="2.2" paint-order="stroke" stroke-linejoin="round" text-anchor="middle" letter-spacing="-0.3" >Tanzania</text>
<text x="286.0" y="498.4" font-size="9.5" font-weight="bold" fill="#2e2e2e" stroke="#fff" stroke-width="2.2" paint-order="stroke" stroke-linejoin="round" text-anchor="middle" letter-spacing="-0.3" >Mozambique</text>
<text x="146.0" y="265.4" font-size="9.5" font-weight="bold" fill="#2e2e2e" stroke="#fff" stroke-width="2.2" paint-order="stroke" stroke-linejoin="round" text-anchor="middle" letter-spacing="-0.3" >Tunisia</text>
<text x="74.3" y="277.0" font-size="9.5" font-weight="bold" fill="#2e2e2e" stroke="#fff" stroke-width="2.2" paint-order="stroke" stroke-linejoin="round" text-anchor="middle" letter-spacing="-0.3" >Morocco</text>
<text x="115.0" y="297.9" font-size="9.5" font-weight="bold" fill="#2e2e2e" stroke="#fff" stroke-width="2.2" paint-order="stroke" stroke-linejoin="round" text-anchor="middle" letter-spacing="-0.3" >Algeria</text>
<text x="182.6" y="303.1" font-size="9.5" font-weight="bold" fill="#2e2e2e" stroke="#fff" stroke-width="2.2" paint-order="stroke" stroke-linejoin="round" text-anchor="middle" letter-spacing="-0.3" >Libya</text>
<text x="237.8" y="303.1" font-size="9.5" font-weight="bold" fill="#2e2e2e" stroke="#fff" stroke-width="2.2" paint-order="stroke" stroke-linejoin="round" text-anchor="middle" letter-spacing="-0.3" >Egypt</text>
<text x="44.0" y="310.4" font-size="9.5" font-weight="bold" fill="#2e2e2e" stroke="#fff" stroke-width="2.2" paint-order="stroke" stroke-linejoin="round" text-anchor="middle" letter-spacing="-0.3" >Western</text>
<text x="44.0" y="320.4" font-size="9.5" font-weight="bold" fill="#2e2e2e" stroke="#fff" stroke-width="2.2" paint-order="stroke" stroke-linejoin="round" text-anchor="middle" letter-spacing="-0.3" >Sahara</text>
<text x="51.7" y="343.4" font-size="9.5" font-weight="bold" fill="#2e2e2e" stroke="#fff" stroke-width="2.2" paint-order="stroke" stroke-linejoin="round" text-anchor="middle" letter-spacing="-0.3" >Mauritania</text>
<text x="94.7" y="348.7" font-size="9.5" font-weight="bold" fill="#2e2e2e" stroke="#fff" stroke-width="2.2" paint-order="stroke" stroke-linejoin="round" text-anchor="middle" letter-spacing="-0.3" >Mali</text>
<text x="146.0" y="350.9" font-size="9.5" font-weight="bold" fill="#2e2e2e" stroke="#fff" stroke-width="2.2" paint-order="stroke" stroke-linejoin="round" text-anchor="middle" letter-spacing="-0.3" >Niger</text>
<text x="188.0" y="362.2" font-size="9.5" font-weight="bold" fill="#2e2e2e" stroke="#fff" stroke-width="2.2" paint-order="stroke" stroke-linejoin="round" text-anchor="middle" letter-spacing="-0.3" >Chad</text>
<text x="241.7" y="356.1" font-size="9.5" font-weight="bold" fill="#2e2e2e" stroke="#fff" stroke-width="2.2" paint-order="stroke" stroke-linejoin="round" text-anchor="middle" letter-spacing="-0.3" >Sudan</text>
<text x="94.7" y="370.9" font-size="9.5" font-weight="bold" fill="#2e2e2e" stroke="#fff" stroke-width="2.2" paint-order="stroke" stroke-linejoin="round" text-anchor="middle" letter-spacing="-0.3" >Burkina</text>
<text x="94.7" y="379.6" font-size="9.5" font-weight="bold" fill="#2e2e2e" stroke="#fff" stroke-width="2.2" paint-order="stroke" stroke-linejoin="round" text-anchor="middle" letter-spacing="-0.3" >Faso</text>
<text x="53.4" y="383.4" font-size="9.5" font-weight="bold" fill="#2e2e2e" stroke="#fff" stroke-width="2.2" paint-order="stroke" stroke-linejoin="round" text-anchor="middle" letter-spacing="-0.3" >Guinea</text>
<text x="139.5" y="387.4" font-size="9.5" font-weight="bold" fill="#2e2e2e" stroke="#fff" stroke-width="2.2" paint-order="stroke" stroke-linejoin="round" text-anchor="middle" letter-spacing="-0.3" >Nigeria</text>
<text x="97.3" y="397.9" font-size="9.5" font-weight="bold" fill="#2e2e2e" stroke="#fff" stroke-width="2.2" paint-order="stroke" stroke-linejoin="round" text-anchor="middle" letter-spacing="-0.3" >Ghana</text>
<text x="155.0" y="434.4" font-size="9.5" font-weight="bold" fill="#2e2e2e" stroke="#fff" stroke-width="2.2" paint-order="stroke" stroke-linejoin="round" text-anchor="middle" letter-spacing="-0.3" >Gabon</text>
<text x="210.4" y="444.4" font-size="9.5" font-weight="bold" fill="#2e2e2e" stroke="#fff" stroke-width="2.2" paint-order="stroke" stroke-linejoin="round" text-anchor="middle" letter-spacing="-0.3" >DRC</text>
<text x="183.0" y="488.4" font-size="9.5" font-weight="bold" fill="#2e2e2e" stroke="#fff" stroke-width="2.2" paint-order="stroke" stroke-linejoin="round" text-anchor="middle" letter-spacing="-0.3" >Angola</text>
<text x="229.0" y="493.1" font-size="9.5" font-weight="bold" fill="#2e2e2e" stroke="#fff" stroke-width="2.2" paint-order="stroke" stroke-linejoin="round" text-anchor="middle" letter-spacing="-0.3" >Zambia</text>
</g>
<text x="322.6" y="373.1" font-size="8.5" font-weight="normal" fill="#2b8ba6" stroke="none" stroke-width="0" paint-order="stroke" stroke-linejoin="round" text-anchor="middle" letter-spacing="-0.1" >Gulf of Aden</text>
<text x="395.6" y="374.5" font-size="8.5" font-weight="normal" fill="#2b8ba6" stroke="none" stroke-width="0" paint-order="stroke" stroke-linejoin="round" text-anchor="middle" letter-spacing="-0.1" >Arabian Sea</text>
<text x="457.0" y="402.1" font-size="8.5" font-weight="normal" fill="#2b8ba6" stroke="none" stroke-width="0" paint-order="stroke" stroke-linejoin="round" text-anchor="middle" letter-spacing="-0.1" >Laccadive Sea</text>
<text x="120.0" y="414.5" font-size="8.5" font-weight="normal" fill="#2b8ba6" stroke="none" stroke-width="0" paint-order="stroke" stroke-linejoin="round" text-anchor="middle" letter-spacing="-0.1" >Gulf of Guinea</text>
<text x="448.0" y="265.9" font-size="8" font-weight="normal" fill="#5a6b68" stroke="#fff" stroke-width="1.6" paint-order="stroke" stroke-linejoin="round" text-anchor="middle" letter-spacing="-0.3" >JK</text>
<text x="453.0" y="276.5" font-size="8" font-weight="normal" fill="#5a6b68" stroke="#fff" stroke-width="1.6" paint-order="stroke" stroke-linejoin="round" text-anchor="middle" letter-spacing="-0.3" >HP</text>
<text x="443.0" y="285.6" font-size="8" font-weight="normal" fill="#5a6b68" stroke="#fff" stroke-width="1.6" paint-order="stroke" stroke-linejoin="round" text-anchor="middle" letter-spacing="-0.3" >PB</text>
<text x="464.0" y="286.9" font-size="8" font-weight="normal" fill="#5a6b68" stroke="#fff" stroke-width="1.6" paint-order="stroke" stroke-linejoin="round" text-anchor="middle" letter-spacing="-0.3" >UK</text>
<text x="466.0" y="297.4" font-size="8" font-weight="normal" fill="#5a6b68" stroke="#fff" stroke-width="1.6" paint-order="stroke" stroke-linejoin="round" text-anchor="middle" letter-spacing="-0.3" >UP</text>
<text x="438.6" y="304.3" font-size="8" font-weight="normal" fill="#5a6b68" stroke="#fff" stroke-width="1.6" paint-order="stroke" stroke-linejoin="round" text-anchor="middle" letter-spacing="-0.3" >RJ</text>
<text x="426.0" y="321.9" font-size="8" font-weight="normal" fill="#5a6b68" stroke="#fff" stroke-width="1.6" paint-order="stroke" stroke-linejoin="round" text-anchor="middle" letter-spacing="-0.3" >GJ</text>
<text x="447.0" y="339.9" font-size="8" font-weight="normal" fill="#5a6b68" stroke="#fff" stroke-width="1.6" paint-order="stroke" stroke-linejoin="round" text-anchor="middle" letter-spacing="-0.3" >MH</text>
<text x="464.7" y="347.9" font-size="8" font-weight="normal" fill="#5a6b68" stroke="#fff" stroke-width="1.6" paint-order="stroke" stroke-linejoin="round" text-anchor="middle" letter-spacing="-0.3" >TS</text>
<text x="448.6" y="361.7" font-size="8" font-weight="normal" fill="#5a6b68" stroke="#fff" stroke-width="1.6" paint-order="stroke" stroke-linejoin="round" text-anchor="middle" letter-spacing="-0.3" >KA</text>
<text x="463.0" y="359.9" font-size="8" font-weight="normal" fill="#5a6b68" stroke="#fff" stroke-width="1.6" paint-order="stroke" stroke-linejoin="round" text-anchor="middle" letter-spacing="-0.3" >AP</text>
<text x="461.7" y="377.9" font-size="8" font-weight="normal" fill="#5a6b68" stroke="#fff" stroke-width="1.6" paint-order="stroke" stroke-linejoin="round" text-anchor="middle" letter-spacing="-0.3" >TN</text>
<text x="453.0" y="388.7" font-size="8" font-weight="normal" fill="#5a6b68" stroke="#fff" stroke-width="1.6" paint-order="stroke" stroke-linejoin="round" text-anchor="middle" letter-spacing="-0.3" >KL</text>
<text x="487.0" y="334.9" font-size="8" font-weight="normal" fill="#5a6b68" stroke="#fff" stroke-width="1.6" paint-order="stroke" stroke-linejoin="round" text-anchor="middle" letter-spacing="-0.3" >OD</text>
<text x="199.6" y="155.4" font-size="15.8" text-anchor="middle" fill="#efe6f2" stroke="#85638f" stroke-width="0.6" font-family="Noto Sans CJK SC, sans-serif" font-weight="300" letter-spacing="0.6">欧洲</text>
<text x="183.4" y="381.7" font-size="15.8" text-anchor="middle" fill="#efe6f2" stroke="#85638f" stroke-width="0.6" font-family="Noto Sans CJK SC, sans-serif" font-weight="300" letter-spacing="0.6">非洲</text>
<text x="498.8" y="155.9" font-size="15.8" text-anchor="middle" fill="#efe6f2" stroke="#85638f" stroke-width="0.6" font-family="Noto Sans CJK SC, sans-serif" font-weight="300" letter-spacing="0.6">亚洲</text>
<text x="421.0" y="490.6" font-size="10" font-weight="normal" fill="#4a3a52" stroke="#fff" stroke-width="2.2" paint-order="stroke" stroke-linejoin="round" text-anchor="middle" letter-spacing="-0.3" >印度洋</text>
<path d="M141.5 137.5L120.5 150.6L165.0 176.2L225.9 212.9L283.0 248.0L409.0 323.3L490.0 370.2" fill="none" stroke="#79bcff" stroke-width="5.6" stroke-linejoin="round" stroke-linecap="round"/>
<path d="M141.5 137.5L120.5 150.6L165.0 176.2L225.9 212.9L283.0 248.0L409.0 323.3L490.0 370.2" fill="none" stroke="#1f8bfb" stroke-width="3.9" stroke-linejoin="round" stroke-linecap="round"/>
<path transform="translate(157.8 172.0) rotate(29.9)" d="M1.6 -2.1 L-1 0 L1.6 2.1" fill="none" stroke="#fff" stroke-width="1" opacity="0.95"/>
<path transform="translate(194.7 194.1) rotate(31.1)" d="M1.6 -2.1 L-1 0 L1.6 2.1" fill="none" stroke="#fff" stroke-width="1" opacity="0.95"/>
<path transform="translate(233.3 217.4) rotate(31.6)" d="M1.6 -2.1 L-1 0 L1.6 2.1" fill="none" stroke="#fff" stroke-width="1" opacity="0.95"/>
<path transform="translate(271.7 241.1) rotate(31.6)" d="M1.6 -2.1 L-1 0 L1.6 2.1" fill="none" stroke="#fff" stroke-width="1" opacity="0.95"/>
<path transform="translate(310.4 264.4) rotate(30.9)" d="M1.6 -2.1 L-1 0 L1.6 2.1" fill="none" stroke="#fff" stroke-width="1" opacity="0.95"/>
<path transform="translate(349.1 287.5) rotate(30.9)" d="M1.6 -2.1 L-1 0 L1.6 2.1" fill="none" stroke="#fff" stroke-width="1" opacity="0.95"/>
<path transform="translate(387.9 310.7) rotate(30.9)" d="M1.6 -2.1 L-1 0 L1.6 2.1" fill="none" stroke="#fff" stroke-width="1" opacity="0.95"/>
<path transform="translate(426.8 333.6) rotate(30.1)" d="M1.6 -2.1 L-1 0 L1.6 2.1" fill="none" stroke="#fff" stroke-width="1" opacity="0.95"/>
<path transform="translate(465.8 356.2) rotate(30.1)" d="M1.6 -2.1 L-1 0 L1.6 2.1" fill="none" stroke="#fff" stroke-width="1" opacity="0.95"/>
<path transform="translate(126.0 147.3) rotate(-32)" d="M-1.6 -2.1 L1 0 L-1.6 2.1" fill="none" stroke="#fff" stroke-width="1"/>
<g transform="translate(-567 -99)"><rect x="705.1" y="244" width="1.4" height="4.2" fill="#3a4a5a"/><rect x="723" y="244" width="1.4" height="4.2" fill="#3a4a5a"/><rect x="705.1" y="255.6" width="1.4" height="3.4" fill="#3a4a5a"/><rect x="723" y="255.6" width="1.4" height="3.4" fill="#3a4a5a"/><rect x="706.2" y="239.2" width="17" height="24.3" fill="#0d86ff"/><path d="M709.4 249.2 C709.6 246.6 713 246.2 715.6 247 C718.4 247.9 719.4 250 718.9 252.6 C718.5 255 717.6 257.4 717.6 259.8 C716.6 258.6 716.4 256.6 716.8 254.6 C717 253.4 716.6 252.6 715.6 252.4 C713.4 252.9 709.3 252.4 709.4 249.2Z" fill="#fff"/><path d="M713.8 257.6 L716.2 256.6 L715.6 258.2Z" fill="#cfe6ff"/><path d="M707 239.4 L707 229.6 Q707 225 711.4 225 L717.2 225 Q721.7 225 721.7 229.6 L721.7 239.4Z" fill="#ff5a26"/><rect x="705.6" y="233.2" width="1.5" height="1.5" fill="#5a5a5a"/><rect x="721.6" y="233.2" width="1.7" height="1.5" fill="#5a5a5a"/><rect x="708.8" y="230.9" width="11.2" height="4.7" rx="1.5" fill="#fff"/></g>
<text x="30.4" y="486.2" font-size="8.5" fill="#2a8097" text-anchor="middle">1000 公里</text>
<path d="M2.6 489.2 v7 M54.6 489.2 v7" stroke="#fff" stroke-width="1.6" fill="none"/><rect x="2.2" y="490.7" width="52.8" height="4" fill="#fff"/><rect x="3.4" y="491.8" width="50.4" height="1.8" fill="#1c1c1c"/>
<g transform="translate(3.0 496.5)"><rect x="0" y="0" width="13.5" height="13" rx="2.4" fill="#eef7f4"/><path d="M0 2.4 Q0 0 2.4 0 H5 V5 H0Z" fill="#b7ef9a"/><path d="M0 10 H13.5 V10.6 Q13.5 13 11.1 13 H2.4 Q0 13 0 10.6Z" fill="#c8f2ff"/><path d="M11.6 1.4 L1.6 6 L6 7.2 L7.4 11.3Z" fill="#1a8dff"/><path d="M6 7.2 L11.6 1.4 L7.4 11.3Z" fill="#0b62d6"/></g>
<text x="18.0" y="506.6" font-size="10.8" font-weight="bold" fill="#10222b" stroke="#10222b" stroke-width="0.35" font-family="Noto Sans CJK SC, sans-serif" letter-spacing="0.1">高德地图</text>
</svg>
<svg class="abs" style="left:567px;top:99px" width="489" height="512" viewBox="567 99 489 512">
<defs><filter id="sh" x="-30%" y="-30%" width="160%" height="160%"><feGaussianBlur stdDeviation="1.6"/></filter></defs>
<rect x="1020.5" y="108.5" width="26" height="26" fill="#000" opacity="0.12" filter="url(#sh)"/>
<rect x="1020.8" y="108" width="25.6" height="25.6" rx="1.5" fill="#fff" stroke="#d9e2e2" stroke-width="0.6"/>
<rect x="1020.5" y="144.5" width="26" height="26" fill="#000" opacity="0.12" filter="url(#sh)"/>
<rect x="1020.8" y="144" width="25.6" height="25.6" rx="1.5" fill="#fff" stroke="#d9e2e2" stroke-width="0.6"/>
<rect x="1020.5" y="180.5" width="26" height="26" fill="#000" opacity="0.12" filter="url(#sh)"/>
<rect x="1020.8" y="180" width="25.6" height="25.6" rx="1.5" fill="#0b57e3" stroke="#0b57e3" stroke-width="0.6"/>
<rect x="1020.5" y="216.5" width="26" height="26" fill="#000" opacity="0.12" filter="url(#sh)"/>
<rect x="1020.8" y="216" width="25.6" height="25.6" rx="1.5" fill="#fff" stroke="#d9e2e2" stroke-width="0.6"/>
<g fill="none" stroke="#333" stroke-width="0.9"><circle cx="1033.6" cy="120.8" r="4.9"/><path d="M1032.2 118.2 L1036 120.8 L1032.2 123.4Z" stroke-linejoin="round"/></g>
<g fill="none" stroke="#333" stroke-width="0.9"><path d="M1028.2 156.8 Q1033.6 151.6 1039 156.8 Q1033.6 162 1028.2 156.8Z"/><circle cx="1033.6" cy="156.8" r="1.9"/></g>
<g fill="none" stroke="#fff" stroke-width="0.9"><circle cx="1033.6" cy="192.8" r="5"/><ellipse cx="1033.6" cy="192.8" rx="2.3" ry="5"/><path d="M1028.6 192.8 h10 M1029.4 190.2 h8.4 M1029.4 195.4 h8.4 M1033.6 187.8 v10"/></g>
<g fill="none" stroke="#333" stroke-width="0.75" stroke-linecap="round"><path d="M1029.6 224.8 l2.6 2.6 M1029.6 227 v-2.2 h2.2 M1037.6 224.8 l-2.6 2.6 M1037.6 227 v-2.2 h-2.2 M1029.6 232.8 l2.6 -2.6 M1029.6 230.6 v2.2 h2.2 M1037.6 232.8 l-2.6 -2.6 M1037.6 230.6 v2.2 h-2.2"/></g>
<rect x="1019.5" y="528.5" width="29" height="75" rx="2" fill="#fff" opacity="0.55" filter="url(#sh)"/>
<rect x="1020.6" y="528.8" width="27" height="38.5" fill="#e6fbff"/><rect x="1020.6" y="567.3" width="27" height="35.3" fill="#f3fdff"/>
<path d="M1027.8 546.8 h13.2 M1034.4 540.2 v13.2" stroke="#4a4a4a" stroke-width="1.5" fill="none"/>
<path d="M1026.5 567.3 h15.5" stroke="#d4dede" stroke-width="0.8"/><path d="M1027.6 584.6 h12.6" stroke="#b4c0c2" stroke-width="1.4"/>
<text x="842.5" y="558.5" font-size="20.3" fill="#a3a9aa" opacity="0.8" font-family="Noto Sans CJK SC, Liberation Sans, sans-serif" font-weight="400">激活 Windows</text>
<text x="838" y="580.3" font-size="15.4" fill="#a3a9aa" opacity="0.8" font-family="Noto Sans CJK SC, Liberation Sans, sans-serif" font-weight="400">转到"设置"以激活 Windows。</text>
</svg>

<div id="float" class="abs"></div>
<svg class="abs" style="left:1070px;top:78px" width="22" height="28" viewBox="1070 78 22 28"><defs><linearGradient id="fg" x1="0" y1="0" x2="1" y2="1"><stop offset="0" stop-color="#7a69ef"/><stop offset="1" stop-color="#a697f8"/></linearGradient></defs><path d="M1075.2 84.6 L1085.8 82.3 Q1087.4 82 1087.8 83.6 L1089.6 95.4 Q1089.8 97 1088.2 97.3 L1078.6 99 Q1077 99.3 1076.6 97.7 L1074 86.4 Q1073.7 84.9 1075.2 84.6Z" fill="url(#fg)"/><rect x="1079" y="87.2" width="16" height="14.6" rx="1.6" fill="#ab9ef9"/><path d="M1082 91.1 h8 M1082 94 h6.2" stroke="#fff" stroke-width="1.1" stroke-linecap="round"/></svg>
</body>
</html>
